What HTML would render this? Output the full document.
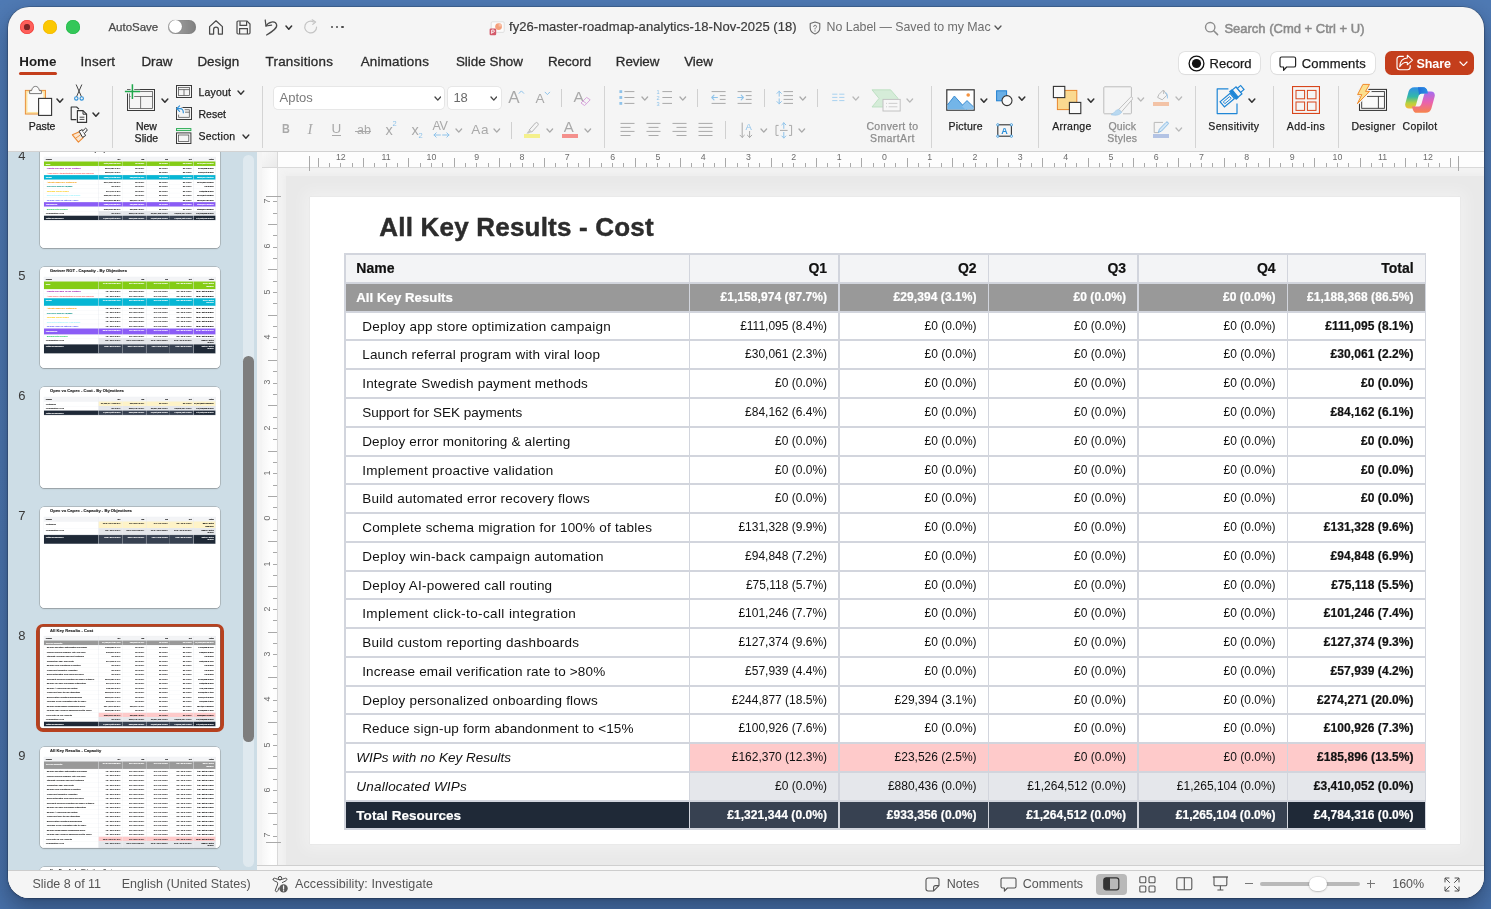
<!DOCTYPE html>
<html><head><meta charset="utf-8"><title>PowerPoint</title>
<style>
html,body{margin:0;padding:0}
body{width:1491px;height:909px;overflow:hidden;position:relative;font-family:"Liberation Sans", sans-serif;
background:#4a73aa;-webkit-font-smoothing:antialiased}
#desk{position:absolute;left:0;top:0;width:1491px;height:909px;background:linear-gradient(180deg,#4f7ab4 0%,#4b75ad 50%,#4770a8 100%)}
#win{position:absolute;left:8px;top:7px;width:1476px;height:891px;border-radius:21px;background:#f5f5f5;overflow:hidden;
box-shadow:0 0 0 0.5px rgba(0,0,0,.3),0 10px 22px 1px rgba(10,20,40,.36),0 1px 3px rgba(10,20,40,.25)}
#w{position:absolute;left:-8px;top:-7px;width:1491px;height:909px;will-change:transform}

.sl{position:absolute;left:0;top:0;width:1150.5px;height:647.5px;background:#fff;overflow:hidden;transform-origin:0 0}
.sl .ti{position:absolute;left:69.8px;top:12.2px;font-size:26px;font-weight:bold;color:#2c2c2c;line-height:36px;letter-spacing:.2px;white-space:nowrap;-webkit-text-stroke:.45px #2c2c2c}
.sl .c{position:absolute;box-sizing:border-box;white-space:nowrap;font-size:12px;color:#111;text-align:right;padding-right:11.9px;overflow:hidden}
.sl .c.n{text-align:left;font-size:13.5px;padding-left:11.3px;padding-right:0;letter-spacing:.2px}
.sl .c.i{padding-left:17.2px}
.sl .c.b{font-weight:bold;letter-spacing:.07px;-webkit-text-stroke:.2px currentColor}
.sl .c.hd{font-size:14px;letter-spacing:0}
.sl .c.it{font-style:italic;letter-spacing:.05px}
.sl .c.w{color:#fff}
.sl .c.wr{white-space:normal;line-height:15px;padding-top:6px;padding-left:42px}
.sl .ln{position:absolute;background:#d2d5dd}
.sl .tb{position:absolute;left:0;top:0;width:1150.5px;height:647.5px;transform-origin:0 0}
.th .tb{transform:translate(-11px,6px) scaleX(1.013)}
.th.t8 .tb{transform:translate(-11px,0px) scaleX(1.013)}
.th .ti{top:7.6px;left:64.4px;-webkit-text-stroke:.9px #2c2c2c}
.th .c{-webkit-text-stroke:.3px currentColor;font-size:14.5px!important;letter-spacing:-.62px!important}
.th .c.n{font-size:16px!important;letter-spacing:-.78px!important}
.th .c.b{-webkit-text-stroke:.5px currentColor}
.th .ln{background:#dfe1e7}

</style></head><body>
<div id="desk"></div>
<div id="win"><div id="w">
<div style="position:absolute;left:20px;top:20px;width:14px;height:14px;border-radius:50%;background:#fe5f5a;box-shadow:inset 0 0 0 0.6px #ee3a34;"><div style="position:absolute;left:4.4px;top:4.4px;width:5.2px;height:5.2px;border-radius:50%;background:#7d2626;"></div></div><div style="position:absolute;left:43px;top:20px;width:14px;height:14px;border-radius:50%;background:#fbc801;box-shadow:inset 0 0 0 0.6px #f2b400;"></div><div style="position:absolute;left:66px;top:20px;width:14px;height:14px;border-radius:50%;background:#34c759;box-shadow:inset 0 0 0 0.6px #1fb845;"></div><div style="position:absolute;top:19.3px;line-height:16px;font-size:11.5px;color:#4a4a4a;white-space:nowrap;left:108.4px;-webkit-text-stroke:0.25px #4a4a4a;">AutoSave</div><div style="position:absolute;left:168px;top:19.8px;width:28px;height:14.2px;border-radius:7.1px;background:linear-gradient(90deg,#a9a9a9,#7f7f7f);box-shadow:inset 0 0 1px rgba(0,0,0,.3);"><div style="position:absolute;left:0.6px;top:0.6px;width:13px;height:13px;border-radius:50%;background:#fff;box-shadow:0 0 1px rgba(0,0,0,.35);"></div></div><svg style="position:absolute;left:208px;top:18.5px;" width="16" height="16.5" viewBox="0 0 16 16.5" fill="none"><path d="M1.6 7.6 L8 1.8 L14.4 7.6 V15 H10.4 V10.6 a2.4 2.4 0 0 0 -4.8 0 V15 H1.6 Z" stroke="#4a4a4a" stroke-width="1.25" stroke-linejoin="round"/></svg><svg style="position:absolute;left:235.5px;top:19.5px;" width="15" height="15" viewBox="0 0 15 15" fill="none"><path d="M2.2 1 H11 L14 4 V12.8 a1.2 1.2 0 0 1 -1.2 1.2 H2.2 a1.2 1.2 0 0 1 -1.2 -1.2 V2.2 a1.2 1.2 0 0 1 1.2 -1.2 Z" stroke="#4a4a4a" stroke-width="1.2"/><path d="M4 1.2 V5.4 H10.6 V1.2" stroke="#4a4a4a" stroke-width="1.2"/><path d="M3.6 14 V8.6 H11.4 V14" stroke="#4a4a4a" stroke-width="1.2"/></svg><svg style="position:absolute;left:262.5px;top:17.5px;" width="16" height="18" viewBox="0 0 16 18" fill="none"><path d="M2.2 2 L3 8 L8.6 7.2" stroke="#4a4a4a" stroke-width="1.25" stroke-linecap="round" stroke-linejoin="round"/><path d="M3 8 C5.2 3.6 12.2 2.4 13.6 6.6 C14.6 9.8 10.4 12.8 3.6 17" stroke="#4a4a4a" stroke-width="1.25" stroke-linecap="round"/></svg><svg style="position:absolute;left:285.2px;top:24.6px;" width="7.6" height="5.2" viewBox="0 0 7.6 5.2" fill="none"><polyline points="1,1 3.8,4.2 6.6,1" stroke="#333" stroke-width="1.5" stroke-linecap="round" stroke-linejoin="round"/></svg><svg style="position:absolute;left:302.5px;top:19px;" width="16" height="16" viewBox="0 0 16 16" fill="none"><path d="M13.6 8 A5.9 5.9 0 1 1 10.6 2.9" stroke="#c4c4c4" stroke-width="1.2" stroke-linecap="round"/><path d="M9.2 0.8 L12.6 3 L9.8 5.4" stroke="#c4c4c4" stroke-width="1.2" stroke-linecap="round" stroke-linejoin="round"/></svg><div style="position:absolute;left:331px;top:25.6px;width:2.4px;height:2.4px;border-radius:50%;background:#4a4a4a;"></div><div style="position:absolute;left:336.1px;top:25.6px;width:2.4px;height:2.4px;border-radius:50%;background:#4a4a4a;"></div><div style="position:absolute;left:341.2px;top:25.6px;width:2.4px;height:2.4px;border-radius:50%;background:#4a4a4a;"></div><svg style="position:absolute;left:489px;top:21px;" width="17" height="15" viewBox="0 0 17 15" fill="none"><rect x="2.2" y="0.8" width="13" height="10.6" rx="1.2" fill="#fbfbfb" stroke="#d9d9d9" stroke-width="0.8"/><circle cx="9.6" cy="5.6" r="3.4" fill="#f4a07c"/><path d="M9.6 5.6 L9.6 2.2 A3.4 3.4 0 0 1 13 5.6 Z" fill="#f7c0a6"/><rect x="0.6" y="7.6" width="6.6" height="6.6" rx="1.2" fill="#d35a6a"/><path d="M2.7 12.8 V9 H4.2 a1.15 1.15 0 0 1 0 2.3 H2.7" stroke="#fff" stroke-width="0.9"/></svg><div style="position:absolute;top:18.9px;line-height:16px;font-size:13px;color:#3a3a3a;white-space:nowrap;letter-spacing:0.05px;left:509px;-webkit-text-stroke:0.2px #3a3a3a;">fy26-master-roadmap-analytics-18-Nov-2025 (18)</div><svg style="position:absolute;left:809px;top:20.5px;" width="12" height="14" viewBox="0 0 12 14" fill="none"><path d="M6 1 L10.8 2.6 V7 C10.8 10 8.6 12 6 13 C3.4 12 1.2 10 1.2 7 V2.6 Z" stroke="#6a6a6a" stroke-width="1.1" stroke-linejoin="round"/><path d="M4.7 5.6 a1.4 1.4 0 1 1 1.9 1.3 c-.5 .3 -.6 .6 -.6 1.1" stroke="#6a6a6a" stroke-width="0.9" stroke-linecap="round"/><circle cx="6" cy="9.9" r="0.55" fill="#6a6a6a"/></svg><div style="position:absolute;top:18.9px;line-height:16px;font-size:12.4px;color:#6e6e6e;white-space:nowrap;letter-spacing:-0.02px;left:826.6px;">No Label — Saved to my Mac</div><svg style="position:absolute;left:994px;top:25.2px;" width="8" height="5.2" viewBox="0 0 8 5.2" fill="none"><polyline points="1,1 4,4.2 7,1" stroke="#555" stroke-width="1.3" stroke-linecap="round" stroke-linejoin="round"/></svg><svg style="position:absolute;left:1204px;top:21px;" width="15" height="15" viewBox="0 0 15 15" fill="none"><circle cx="6.2" cy="6.2" r="4.7" stroke="#8c8c8c" stroke-width="1.4"/><path d="M9.7 9.7 L13.6 13.6" stroke="#8c8c8c" stroke-width="1.5" stroke-linecap="round"/></svg><div style="position:absolute;top:20.9px;line-height:16px;font-size:13px;color:#8a8a8a;white-space:nowrap;left:1224.4px;-webkit-text-stroke:0.5px #8a8a8a;">Search (Cmd + Ctrl + U)</div><div style="position:absolute;top:54px;line-height:16px;font-size:13.4px;color:#1e1e1e;white-space:nowrap;font-weight:bold;letter-spacing:-0.055px;left:19.3px;">Home</div><div style="position:absolute;top:54px;line-height:16px;font-size:13.4px;color:#2b2b2b;white-space:nowrap;letter-spacing:0.233px;left:80.4px;-webkit-text-stroke:0.3px #2b2b2b;">Insert</div><div style="position:absolute;top:54px;line-height:16px;font-size:13.4px;color:#2b2b2b;white-space:nowrap;letter-spacing:-0.162px;left:141.6px;-webkit-text-stroke:0.3px #2b2b2b;">Draw</div><div style="position:absolute;top:54px;line-height:16px;font-size:13.4px;color:#2b2b2b;white-space:nowrap;letter-spacing:0.035px;left:197.4px;-webkit-text-stroke:0.3px #2b2b2b;">Design</div><div style="position:absolute;top:54px;line-height:16px;font-size:13.4px;color:#2b2b2b;white-space:nowrap;letter-spacing:0.245px;left:265.5px;-webkit-text-stroke:0.3px #2b2b2b;">Transitions</div><div style="position:absolute;top:54px;line-height:16px;font-size:13.4px;color:#2b2b2b;white-space:nowrap;letter-spacing:0.215px;left:360.7px;-webkit-text-stroke:0.3px #2b2b2b;">Animations</div><div style="position:absolute;top:54px;line-height:16px;font-size:13.4px;color:#2b2b2b;white-space:nowrap;letter-spacing:0.01px;left:455.9px;-webkit-text-stroke:0.3px #2b2b2b;">Slide Show</div><div style="position:absolute;top:54px;line-height:16px;font-size:13.4px;color:#2b2b2b;white-space:nowrap;letter-spacing:0.005px;left:547.9px;-webkit-text-stroke:0.3px #2b2b2b;">Record</div><div style="position:absolute;top:54px;line-height:16px;font-size:13.4px;color:#2b2b2b;white-space:nowrap;letter-spacing:-0.068px;left:615.8px;-webkit-text-stroke:0.3px #2b2b2b;">Review</div><div style="position:absolute;top:54px;line-height:16px;font-size:13.4px;color:#2b2b2b;white-space:nowrap;letter-spacing:-0.024px;left:684.2px;-webkit-text-stroke:0.3px #2b2b2b;">View</div><div style="position:absolute;left:19px;top:71.8px;width:38px;height:3px;background:#c43e1c;border-radius:1.5px;"></div><div style="position:absolute;left:1179px;top:51.8px;width:80.5px;height:22.6px;background:#fff;border-radius:6px;box-shadow:0 0 0 0.8px #dcdcdc,0 0.5px 1px rgba(0,0,0,.08);"></div><svg style="position:absolute;left:1187.5px;top:54.7px;" width="17" height="17" viewBox="0 0 17 17" fill="none"><circle cx="8.5" cy="8.5" r="7.4" stroke="#111" stroke-width="1.3"/><circle cx="8.5" cy="8.5" r="4.6" fill="#111"/></svg><div style="position:absolute;top:56px;line-height:16px;font-size:13px;color:#1a1a1a;white-space:nowrap;left:1209.6px;-webkit-text-stroke:0.25px #1a1a1a;">Record</div><div style="position:absolute;left:1271px;top:51.8px;width:103.5px;height:22.6px;background:#fff;border-radius:6px;box-shadow:0 0 0 0.8px #dcdcdc,0 0.5px 1px rgba(0,0,0,.08);"></div><svg style="position:absolute;left:1279.4px;top:55.6px;" width="18" height="16" viewBox="0 0 18 16" fill="none"><path d="M2.6 1 H15 a1.6 1.6 0 0 1 1.6 1.6 V9.4 a1.6 1.6 0 0 1 -1.6 1.6 H7.6 L4.6 14.4 V11 H2.6 a1.6 1.6 0 0 1 -1.6 -1.6 V2.6 a1.6 1.6 0 0 1 1.6 -1.6 Z" stroke="#222" stroke-width="1.2" stroke-linejoin="round"/></svg><div style="position:absolute;top:56px;line-height:16px;font-size:13px;color:#1a1a1a;white-space:nowrap;letter-spacing:0.18px;left:1301.7px;-webkit-text-stroke:0.25px #1a1a1a;">Comments</div><div style="position:absolute;left:1385.3px;top:51.2px;width:89px;height:23.6px;background:#c43e1c;border-radius:6.5px;"></div><svg style="position:absolute;left:1395.5px;top:54px;" width="18" height="18" viewBox="0 0 18 18" fill="none"><path d="M7.4 2.3 H3.7 a2.7 2.7 0 0 0 -2.7 2.7 V13 a2.7 2.7 0 0 0 2.7 2.7 H11.5 a2.7 2.7 0 0 0 2.7 -2.7 V11.6" stroke="#fff" stroke-width="1.15" stroke-linecap="round"/><path d="M11.3 1.2 L16.5 6.1 L11.3 10.8 V8.3 C8 8.2 5.6 9.6 3.7 12.8 C3.9 8 6.6 4.4 11.3 4.1 Z" fill="#c43e1c" stroke="#fff" stroke-width="1.05" stroke-linejoin="round"/></svg><div style="position:absolute;top:56px;line-height:16px;font-size:12.6px;color:#fff;white-space:nowrap;font-weight:bold;letter-spacing:-0.15px;left:1416.5px;">Share</div><svg style="position:absolute;left:1458.7px;top:60.8px;" width="9" height="5.6" viewBox="0 0 9 5.6" fill="none"><polyline points="1,1 4.5,4.6 8,1" stroke="#fff" stroke-width="1.2" stroke-linecap="round" stroke-linejoin="round"/></svg><svg style="position:absolute;left:24px;top:85px;" width="30" height="32" viewBox="0 0 30 32" fill="none"><rect x="2.5" y="6.5" width="17.8" height="21.4" fill="#fbfbfb" stroke="#fbe2a0" stroke-width="1.9"/><rect x="1.35" y="5.35" width="20.1" height="23.7" stroke="#e8872e" stroke-width="0.9"/><path d="M5.6 8.6 V5.6 H7.6 C8.2 2.6 9.6 1.4 11.5 1.4 C13.4 1.4 14.8 2.6 15.4 5.6 H17.4 V8.6 Z" fill="#fafafa" stroke="#6a6a6a" stroke-width="0.9" stroke-linejoin="round"/><rect x="14.6" y="13.4" width="13" height="17" fill="#fff" stroke="#333" stroke-width="1.1"/></svg><svg style="position:absolute;left:56.2px;top:97.55px;" width="7.8" height="5.3" viewBox="0 0 7.8 5.3" fill="none"><polyline points="1,1 3.9,4.3 6.8,1" stroke="#333" stroke-width="1.5" stroke-linecap="round" stroke-linejoin="round"/></svg><div style="position:absolute;top:118.3px;line-height:16px;font-size:10.5px;color:#1e1e1e;white-space:nowrap;letter-spacing:-0.052px;left:-108px;width:300px;text-align:center;-webkit-text-stroke:0.25px #1e1e1e;">Paste</div><svg style="position:absolute;left:73px;top:83.5px;" width="13" height="17.5" viewBox="0 0 13 17.5" fill="none"><path d="M3.3 0.9 L8.3 12.4 M8.7 0.9 L3.7 12.4" stroke="#444" stroke-width="1" stroke-linecap="round"/><circle cx="3.3" cy="14.4" r="1.7" stroke="#2b8fd9" stroke-width="1.1"/><circle cx="8.7" cy="14.4" r="1.7" stroke="#2b8fd9" stroke-width="1.1"/></svg><svg style="position:absolute;left:70px;top:105.5px;" width="18" height="17.5" viewBox="0 0 18 17.5" fill="none"><path d="M6.4 13.6 H1.2 V1 H6.6 L9 3.2" stroke="#333" stroke-width="1.1" stroke-linejoin="round"/><path d="M7.4 4.6 H13 L16.6 8.2 V16.4 H7.4 Z" fill="#fafafa" stroke="#333" stroke-width="1.1" stroke-linejoin="round"/><path d="M13 4.6 V8.2 H16.6" stroke="#333" stroke-width="1"/><path d="M9.6 11.2 H14.4 M9.6 13.4 H14.4" stroke="#333" stroke-width="0.9"/></svg><svg style="position:absolute;left:92px;top:111.65px;" width="7.8" height="5.3" viewBox="0 0 7.8 5.3" fill="none"><polyline points="1,1 3.9,4.3 6.8,1" stroke="#333" stroke-width="1.5" stroke-linecap="round" stroke-linejoin="round"/></svg><svg style="position:absolute;left:70.5px;top:127px;" width="18" height="17" viewBox="0 0 18 17" fill="none"><path d="M1.4 7.8 L9 4.4 L12.2 10.6 L7.4 15.2 Z" fill="#fbe6cf" stroke="#ec8a34" stroke-width="1.1" stroke-linejoin="round"/><path d="M4.4 11.4 L9.6 7.8" stroke="#ec8a34" stroke-width="0.9"/><path d="M8 4.2 L11.2 2.6 L14.6 8.6 L11.6 10.4 Z" fill="#fafafa" stroke="#333" stroke-width="1" stroke-linejoin="round"/><path d="M11.6 4 L14.6 1.2 L16.4 2.8 L13.6 6.4" fill="#fafafa" stroke="#333" stroke-width="1" stroke-linejoin="round"/></svg><div style="position:absolute;left:112px;top:86px;width:1px;height:61.6px;background:#d4d4d4;"></div><svg style="position:absolute;left:123px;top:83px;" width="34" height="30" viewBox="0 0 34 30" fill="none"><rect x="4.5" y="6.5" width="27" height="21" stroke="#3a3a3a" stroke-width="1"/><rect x="6.6" y="8.6" width="22.8" height="16.8" stroke="#444" stroke-width="0.7"/><path d="M6.6 13.5 H29.4 M17.6 13.5 V25.4" stroke="#444" stroke-width="0.7"/><path d="M1.9 8.6 H17.1 M9.4 1.2 V15.9" stroke="#f5f5f5" stroke-width="3.6"/><path d="M1.9 8.6 H17.1 M9.4 1.2 V15.9" stroke="#1ea84b" stroke-width="1.5"/></svg><svg style="position:absolute;left:161px;top:97.95px;" width="7.8" height="5.3" viewBox="0 0 7.8 5.3" fill="none"><polyline points="1,1 3.9,4.3 6.8,1" stroke="#333" stroke-width="1.5" stroke-linecap="round" stroke-linejoin="round"/></svg><div style="position:absolute;top:118.3px;line-height:16px;font-size:10.5px;color:#1e1e1e;white-space:nowrap;letter-spacing:-0.005px;left:-3.6px;width:300px;text-align:center;-webkit-text-stroke:0.25px #1e1e1e;">New</div><div style="position:absolute;top:130.1px;line-height:16px;font-size:10.5px;color:#1e1e1e;white-space:nowrap;letter-spacing:0.048px;left:-3.6px;width:300px;text-align:center;-webkit-text-stroke:0.25px #1e1e1e;">Slide</div><svg style="position:absolute;left:175px;top:84px;" width="18" height="15" viewBox="0 0 18 15" fill="none"><rect x="1.5" y="1.5" width="15" height="12" stroke="#3a3a3a" stroke-width="1"/><rect x="3.6" y="3.6" width="10.8" height="7.8" stroke="#444" stroke-width="0.7"/><path d="M3.6 5.6 H14.4 M9 5.6 V11.4" stroke="#444" stroke-width="0.7"/></svg><div style="position:absolute;top:84.1px;line-height:16px;font-size:10.5px;color:#1e1e1e;white-space:nowrap;letter-spacing:0.195px;left:198.4px;-webkit-text-stroke:0.25px #1e1e1e;">Layout</div><svg style="position:absolute;left:236.9px;top:89.9px;" width="7.8" height="5.2" viewBox="0 0 7.8 5.2" fill="none"><polyline points="1,1 3.9,4.2 6.8,1" stroke="#333" stroke-width="1.4" stroke-linecap="round" stroke-linejoin="round"/></svg><svg style="position:absolute;left:175px;top:105px;" width="18" height="16" viewBox="0 0 18 16" fill="none"><rect x="1.5" y="2.5" width="15" height="12" stroke="#3a3a3a" stroke-width="1"/><path d="M9.4 4.7 H14.4 V12.4 H3.6 V9.6" stroke="#444" stroke-width="0.7"/><path d="M10 7.2 H14.4" stroke="#444" stroke-width="0.7"/><path d="M1.8 3.6 H5.4 C7.4 3.6 8.6 5.2 8.4 8" stroke="#f5f5f5" stroke-width="3.4"/><path d="M4.6 0.9 L1.7 3.6 L4.6 6.3 M1.9 3.6 H5.2 C7.2 3.6 8.5 5.2 8.3 7.8" stroke="#2b8fd9" stroke-width="1.15" stroke-linecap="round" stroke-linejoin="round"/></svg><div style="position:absolute;top:106.1px;line-height:16px;font-size:10.5px;color:#1e1e1e;white-space:nowrap;letter-spacing:0.033px;left:198.4px;-webkit-text-stroke:0.25px #1e1e1e;">Reset</div><svg style="position:absolute;left:175px;top:127px;" width="18" height="18" viewBox="0 0 18 18" fill="none"><rect x="1.5" y="1.6" width="14.4" height="2" stroke="#1ea84b" stroke-width="0.9" fill="#e3f4e8"/><rect x="1.5" y="5.9" width="14.4" height="10.6" stroke="#3a3a3a" stroke-width="1"/><rect x="3.6" y="8" width="10.2" height="6.4" stroke="#444" stroke-width="0.7"/></svg><div style="position:absolute;top:128.3px;line-height:16px;font-size:10.5px;color:#1e1e1e;white-space:nowrap;letter-spacing:0.281px;left:198.4px;-webkit-text-stroke:0.25px #1e1e1e;">Section</div><svg style="position:absolute;left:242px;top:134px;" width="7.8" height="5.2" viewBox="0 0 7.8 5.2" fill="none"><polyline points="1,1 3.9,4.2 6.8,1" stroke="#333" stroke-width="1.4" stroke-linecap="round" stroke-linejoin="round"/></svg><div style="position:absolute;left:262px;top:86px;width:1px;height:61.6px;background:#d4d4d4;"></div><div style="position:absolute;left:273.6px;top:86.8px;width:170.6px;height:22.6px;background:#fff;border-radius:4px;box-shadow:0 0 0 0.8px #e2e2e2;"></div><div style="position:absolute;top:89.8px;line-height:16px;font-size:13px;color:#7a7a7a;white-space:nowrap;left:279.5px;">Aptos</div><svg style="position:absolute;left:433.5px;top:95.65px;" width="7.6" height="5.1" viewBox="0 0 7.6 5.1" fill="none"><polyline points="1,1 3.8,4.1 6.6,1" stroke="#444" stroke-width="1.3" stroke-linecap="round" stroke-linejoin="round"/></svg><div style="position:absolute;left:447.6px;top:86.8px;width:53px;height:22.6px;background:#fff;border-radius:4px;box-shadow:0 0 0 0.8px #e2e2e2;"></div><div style="position:absolute;top:89.8px;line-height:16px;font-size:13px;color:#6a6a6a;white-space:nowrap;left:453.4px;">18</div><svg style="position:absolute;left:489.6px;top:95.65px;" width="7.6" height="5.1" viewBox="0 0 7.6 5.1" fill="none"><polyline points="1,1 3.8,4.1 6.6,1" stroke="#444" stroke-width="1.3" stroke-linecap="round" stroke-linejoin="round"/></svg><div style="position:absolute;top:89.6px;line-height:16px;font-size:17px;color:#a9a9a9;white-space:nowrap;left:508.2px;">A</div><svg style="position:absolute;left:517.5px;top:90.4px;" width="7" height="4.5" viewBox="0 0 7 4.5" fill="none"><polyline points="0.8,3.6 3.4,0.9 6,3.6" stroke="#8fc3ea" stroke-width="1"/></svg><div style="position:absolute;top:91.2px;line-height:16px;font-size:13.5px;color:#a9a9a9;white-space:nowrap;left:535.5px;">A</div><svg style="position:absolute;left:543.6px;top:90.8px;" width="7" height="4.5" viewBox="0 0 7 4.5" fill="none"><polyline points="0.8,0.9 3.4,3.6 6,0.9" stroke="#8fc3ea" stroke-width="1"/></svg><div style="position:absolute;left:561.1px;top:89px;width:1px;height:17.8px;background:#d0d0d0;"></div><div style="position:absolute;top:88.6px;line-height:16px;font-size:15.5px;color:#a9a9a9;white-space:nowrap;left:573.6px;">A</div><svg style="position:absolute;left:579.5px;top:95.5px;" width="12" height="11" viewBox="0 0 12 11" fill="none"><path d="M1 7 L6.6 1.4 L10.2 3.8 L4.6 9.6 Z" stroke="#d7a6dc" stroke-width="1" stroke-linejoin="round"/><path d="M3 5 L6.6 7.6" stroke="#d7a6dc" stroke-width="1"/></svg><div style="position:absolute;left:604.2px;top:86px;width:1px;height:61.6px;background:#d4d4d4;"></div><div style="position:absolute;top:121.2px;line-height:16px;font-size:13.5px;color:#a9a9a9;white-space:nowrap;font-weight:bold;left:281.8px;transform:scaleX(.8);transform-origin:0 50%;">B</div><div style="position:absolute;top:121.2px;line-height:16px;font-size:14px;color:#a9a9a9;white-space:nowrap;left:307.6px;font-style:italic;font-family:'Liberation Serif',serif;font-size:15px;">I</div><div style="position:absolute;top:121px;line-height:16px;font-size:13.5px;color:#a9a9a9;white-space:nowrap;left:331.6px;">U</div><div style="position:absolute;left:331.8px;top:135.4px;width:9.4px;height:1px;background:#a9a9a9;"></div><div style="position:absolute;top:121.6px;line-height:16px;font-size:12.5px;color:#a9a9a9;white-space:nowrap;left:357px;">ab</div><div style="position:absolute;left:355px;top:131px;width:15.8px;height:1px;background:#a9a9a9;"></div><div style="position:absolute;top:122px;line-height:16px;font-size:14.5px;color:#a9a9a9;white-space:nowrap;left:385.6px;">x</div><div style="position:absolute;top:116.2px;line-height:16px;font-size:7.5px;color:#8fc3ea;white-space:nowrap;left:392.4px;">2</div><div style="position:absolute;top:122px;line-height:16px;font-size:14.5px;color:#a9a9a9;white-space:nowrap;left:411.6px;">x</div><div style="position:absolute;top:128.2px;line-height:16px;font-size:7.5px;color:#8fc3ea;white-space:nowrap;left:418.4px;">2</div><div style="position:absolute;top:118.4px;line-height:16px;font-size:12.5px;color:#a9a9a9;white-space:nowrap;letter-spacing:-0.6px;left:432.6px;">AV</div><svg style="position:absolute;left:432.8px;top:132.4px;" width="17" height="6" viewBox="0 0 17 6" fill="none"><path d="M1 3 H7.4 M3.2 0.8 L1 3 L3.2 5.2 M9.6 3 H16 M13.8 0.8 L16 3 L13.8 5.2" stroke="#8fc3ea" stroke-width="1" stroke-linecap="round" stroke-linejoin="round"/></svg><svg style="position:absolute;left:455.2px;top:127.65px;" width="7.6" height="5.1" viewBox="0 0 7.6 5.1" fill="none"><polyline points="1,1 3.8,4.1 6.6,1" stroke="#a9a9a9" stroke-width="1.3" stroke-linecap="round" stroke-linejoin="round"/></svg><div style="position:absolute;top:121.6px;line-height:16px;font-size:13.5px;color:#a9a9a9;white-space:nowrap;letter-spacing:0.8px;left:471.2px;">Aa</div><svg style="position:absolute;left:493.2px;top:127.65px;" width="7.6" height="5.1" viewBox="0 0 7.6 5.1" fill="none"><polyline points="1,1 3.8,4.1 6.6,1" stroke="#a9a9a9" stroke-width="1.3" stroke-linecap="round" stroke-linejoin="round"/></svg><div style="position:absolute;left:511.2px;top:121.5px;width:1px;height:17px;background:#d0d0d0;"></div><svg style="position:absolute;left:524px;top:120.5px;" width="17" height="14" viewBox="0 0 17 14" fill="none"><path d="M5.2 9 L11.4 2 a1.6 1.6 0 0 1 2.4 0.2 a1.6 1.6 0 0 1 0 2.2 L7.8 11 Z" stroke="#b4b4b4" stroke-width="1" stroke-linejoin="round"/><path d="M5.2 9 L7.8 11 L4.4 12.4 L2.4 12.4 Z" fill="#c4c4c4"/></svg><div style="position:absolute;left:524px;top:134px;width:16px;height:3.8px;background:#f4f08c;"></div><svg style="position:absolute;left:546px;top:127.65px;" width="7.6" height="5.1" viewBox="0 0 7.6 5.1" fill="none"><polyline points="1,1 3.8,4.1 6.6,1" stroke="#a9a9a9" stroke-width="1.3" stroke-linecap="round" stroke-linejoin="round"/></svg><div style="position:absolute;top:119px;line-height:16px;font-size:15px;color:#a9a9a9;white-space:nowrap;left:563.8px;">A</div><div style="position:absolute;left:562px;top:134px;width:16px;height:3.8px;background:#f4908c;"></div><svg style="position:absolute;left:584.2px;top:127.65px;" width="7.6" height="5.1" viewBox="0 0 7.6 5.1" fill="none"><polyline points="1,1 3.8,4.1 6.6,1" stroke="#a9a9a9" stroke-width="1.3" stroke-linecap="round" stroke-linejoin="round"/></svg><svg style="position:absolute;left:618.5px;top:89px;" width="16" height="17" viewBox="0 0 16 17" fill="none"><rect x="0.4" y="1.2" width="2.8" height="2.8" fill="#8fc3ea"/><path d="M5.4 2.6 H15.4" stroke="#a9a9a9" stroke-width="1"/><rect x="0.4" y="7.1" width="2.8" height="2.8" fill="#8fc3ea"/><path d="M5.4 8.5 H15.4" stroke="#a9a9a9" stroke-width="1"/><rect x="0.4" y="13" width="2.8" height="2.8" fill="#8fc3ea"/><path d="M5.4 14.4 H15.4" stroke="#a9a9a9" stroke-width="1"/></svg><svg style="position:absolute;left:641.2px;top:95.65px;" width="7.6" height="5.1" viewBox="0 0 7.6 5.1" fill="none"><polyline points="1,1 3.8,4.1 6.6,1" stroke="#a9a9a9" stroke-width="1.3" stroke-linecap="round" stroke-linejoin="round"/></svg><svg style="position:absolute;left:656px;top:88px;" width="17" height="19" viewBox="0 0 17 19" fill="none"><path d="M6.4 3.6 H16" stroke="#a9a9a9" stroke-width="1"/><path d="M6.4 9.5 H16" stroke="#a9a9a9" stroke-width="1"/><path d="M6.4 15.4 H16" stroke="#a9a9a9" stroke-width="1"/><text x="0.4" y="6" font-size="5.6" fill="#8fc3ea" font-family="Liberation Sans">1</text><text x="0.4" y="12" font-size="5.6" fill="#8fc3ea" font-family="Liberation Sans">2</text><text x="0.4" y="18" font-size="5.6" fill="#8fc3ea" font-family="Liberation Sans">3</text></svg><svg style="position:absolute;left:679.2px;top:95.65px;" width="7.6" height="5.1" viewBox="0 0 7.6 5.1" fill="none"><polyline points="1,1 3.8,4.1 6.6,1" stroke="#a9a9a9" stroke-width="1.3" stroke-linecap="round" stroke-linejoin="round"/></svg><div style="position:absolute;left:696.9px;top:89px;width:1px;height:17.8px;background:#d0d0d0;"></div><svg style="position:absolute;left:710.5px;top:90px;" width="16" height="15" viewBox="0 0 16 15" fill="none"><path d="M0.6 1.6 H14.6 M8.8 5.6 H14.6 M8.8 9.4 H14.6 M0.6 13.4 H14.6" stroke="#a9a9a9" stroke-width="1"/><path d="M6.4 7.5 H0.8 M3 5.2 L0.8 7.5 L3 9.8" stroke="#8fc3ea" stroke-width="1.1" stroke-linecap="round" stroke-linejoin="round"/></svg><svg style="position:absolute;left:736.5px;top:90px;" width="16" height="15" viewBox="0 0 16 15" fill="none"><path d="M0.6 1.6 H14.6 M8.8 5.6 H14.6 M8.8 9.4 H14.6 M0.6 13.4 H14.6" stroke="#a9a9a9" stroke-width="1"/><path d="M0.8 7.5 H6.4 M4.2 5.2 L6.4 7.5 L4.2 9.8" stroke="#8fc3ea" stroke-width="1.1" stroke-linecap="round" stroke-linejoin="round"/></svg><div style="position:absolute;left:764px;top:89px;width:1px;height:17.8px;background:#d0d0d0;"></div><svg style="position:absolute;left:776px;top:90px;" width="18" height="15" viewBox="0 0 18 15" fill="none"><path d="M7.6 1.6 H17 M7.6 5.6 H17 M7.6 9.4 H17 M7.6 13.4 H17" stroke="#a9a9a9" stroke-width="1"/><path d="M3.2 1.2 V6.2 M3.2 8.8 V13.8 M1 3.4 L3.2 1.2 L5.4 3.4 M1 11.6 L3.2 13.8 L5.4 11.6" stroke="#8fc3ea" stroke-width="1" stroke-linecap="round" stroke-linejoin="round"/></svg><svg style="position:absolute;left:799.1px;top:95.65px;" width="7.6" height="5.1" viewBox="0 0 7.6 5.1" fill="none"><polyline points="1,1 3.8,4.1 6.6,1" stroke="#a9a9a9" stroke-width="1.3" stroke-linecap="round" stroke-linejoin="round"/></svg><div style="position:absolute;left:817px;top:89px;width:1px;height:17.8px;background:#d0d0d0;"></div><svg style="position:absolute;left:619.5px;top:121px;" width="16" height="17" viewBox="0 0 16 17" fill="none"><path d="M0.5 2.4 H14.5" stroke="#a9a9a9" stroke-width="1"/><path d="M0.5 6.4 H10.5" stroke="#a9a9a9" stroke-width="1"/><path d="M0.5 10.4 H14.5" stroke="#a9a9a9" stroke-width="1"/><path d="M0.5 14.5 H10.5" stroke="#a9a9a9" stroke-width="1"/></svg><svg style="position:absolute;left:645.5px;top:121px;" width="16" height="17" viewBox="0 0 16 17" fill="none"><path d="M0.5 2.4 H14.5" stroke="#a9a9a9" stroke-width="1"/><path d="M2.5 6.4 H12.5" stroke="#a9a9a9" stroke-width="1"/><path d="M0.5 10.4 H14.5" stroke="#a9a9a9" stroke-width="1"/><path d="M2.5 14.5 H12.5" stroke="#a9a9a9" stroke-width="1"/></svg><svg style="position:absolute;left:671.5px;top:121px;" width="16" height="17" viewBox="0 0 16 17" fill="none"><path d="M0.5 2.4 H14.5" stroke="#a9a9a9" stroke-width="1"/><path d="M4.5 6.4 H14.5" stroke="#a9a9a9" stroke-width="1"/><path d="M0.5 10.4 H14.5" stroke="#a9a9a9" stroke-width="1"/><path d="M4.5 14.5 H14.5" stroke="#a9a9a9" stroke-width="1"/></svg><svg style="position:absolute;left:697.5px;top:121px;" width="16" height="17" viewBox="0 0 16 17" fill="none"><path d="M0.5 2.4 H14.5" stroke="#a9a9a9" stroke-width="1"/><path d="M0.5 6.4 H14.5" stroke="#a9a9a9" stroke-width="1"/><path d="M0.5 10.4 H14.5" stroke="#a9a9a9" stroke-width="1"/><path d="M0.5 14.5 H14.5" stroke="#a9a9a9" stroke-width="1"/></svg><div style="position:absolute;left:724.9px;top:121px;width:1px;height:17.5px;background:#d0d0d0;"></div><svg style="position:absolute;left:739px;top:121.5px;" width="16" height="17" viewBox="0 0 16 17" fill="none"><path d="M3.2 1 V15.4 M1 13.2 L3.2 15.4 L5.4 13.2 M10.6 9.4 V15.4 M8.4 13.2 L10.6 15.4 L12.8 13.2" stroke="#a9a9a9" stroke-width="1" stroke-linecap="round" stroke-linejoin="round"/><text x="6.6" y="8" font-size="9.5" fill="#8fc3ea" font-family="Liberation Sans">A</text></svg><svg style="position:absolute;left:760px;top:127.65px;" width="7.6" height="5.1" viewBox="0 0 7.6 5.1" fill="none"><polyline points="1,1 3.8,4.1 6.6,1" stroke="#a9a9a9" stroke-width="1.3" stroke-linecap="round" stroke-linejoin="round"/></svg><svg style="position:absolute;left:775.4px;top:121.5px;" width="18" height="17" viewBox="0 0 18 17" fill="none"><path d="M3.6 3.4 H1 V13.4 H3.6 M14 3.4 H16.6 V13.4 H14" stroke="#a9a9a9" stroke-width="1"/><path d="M5 8.4 H12.6" stroke="#a9a9a9" stroke-width="1"/><path d="M8.8 0.8 V6.4 M6.8 2.8 L8.8 0.8 L10.8 2.8 M8.8 10.4 V16 M6.8 14 L8.8 16 L10.8 14" stroke="#8fc3ea" stroke-width="1" stroke-linecap="round" stroke-linejoin="round"/></svg><svg style="position:absolute;left:798.1px;top:127.65px;" width="7.6" height="5.1" viewBox="0 0 7.6 5.1" fill="none"><polyline points="1,1 3.8,4.1 6.6,1" stroke="#a9a9a9" stroke-width="1.3" stroke-linecap="round" stroke-linejoin="round"/></svg><svg style="position:absolute;left:831.5px;top:93px;" width="13" height="9" viewBox="0 0 13 9" fill="none"><path d="M0.2 1.2 H5.4 M7.2 1.2 H12.4 M0.2 4.4 H5.4 M7.2 4.4 H12.4 M0.2 7.6 H5.4 M7.2 7.6 H12.4" stroke="#a9d2f0" stroke-width="1"/></svg><svg style="position:absolute;left:852.1px;top:95.65px;" width="7.6" height="5.1" viewBox="0 0 7.6 5.1" fill="none"><polyline points="1,1 3.8,4.1 6.6,1" stroke="#b8b8b8" stroke-width="1.3" stroke-linecap="round" stroke-linejoin="round"/></svg><svg style="position:absolute;left:870.5px;top:88.5px;" width="30" height="23" viewBox="0 0 30 23" fill="none"><path d="M1 0.8 H19.6 L27 9.4 L19.6 18 H1 L8 9.4 Z" fill="#d5ecd8" stroke="#b5dcbb" stroke-width="0.8" stroke-linejoin="round"/><rect x="12" y="10.4" width="17.2" height="11.6" fill="#f7f7f7" stroke="#c2c2c2" stroke-width="1"/><path d="M15 14.4 H16 M17.6 14.4 H26.4 M15 17.8 H16 M17.6 17.8 H26.4" stroke="#c8c8c8" stroke-width="0.9"/></svg><svg style="position:absolute;left:906px;top:97.65px;" width="7.6" height="5.1" viewBox="0 0 7.6 5.1" fill="none"><polyline points="1,1 3.8,4.1 6.6,1" stroke="#b8b8b8" stroke-width="1.3" stroke-linecap="round" stroke-linejoin="round"/></svg><div style="position:absolute;top:118.3px;line-height:16px;font-size:10.5px;color:#8c8c8c;white-space:nowrap;letter-spacing:0.345px;left:742.4px;width:300px;text-align:center;-webkit-text-stroke:0.25px #8c8c8c;">Convert to</div><div style="position:absolute;top:130.3px;line-height:16px;font-size:10.5px;color:#8c8c8c;white-space:nowrap;letter-spacing:0.41px;left:742.4px;width:300px;text-align:center;-webkit-text-stroke:0.25px #8c8c8c;">SmartArt</div><div style="position:absolute;left:931px;top:86px;width:1px;height:61.6px;background:#d4d4d4;"></div><svg style="position:absolute;left:945.5px;top:88.5px;" width="29" height="22" viewBox="0 0 29 22" fill="none"><rect x="0.8" y="0.8" width="27.4" height="20.4" fill="#fff" stroke="#333" stroke-width="1.2"/><path d="M1.4 16 L8.4 7 L17.6 17.2 L22 20.6 H1.4 Z" fill="#73b5e8"/><path d="M8.4 7 L1.4 16 M8.4 7 L20.6 20.6" stroke="#2f86cf" stroke-width="0.9"/><path d="M15.6 17 L21 11.6 L27.6 18 V20.6 H19.4 Z" fill="#8cc3ee"/><path d="M16.2 16.4 L21 11.6 L27.6 18" stroke="#2f86cf" stroke-width="0.9"/><circle cx="22.2" cy="6" r="1.8" fill="#f5923e"/></svg><svg style="position:absolute;left:979.9px;top:97.65px;" width="7.8" height="5.3" viewBox="0 0 7.8 5.3" fill="none"><polyline points="1,1 3.9,4.3 6.8,1" stroke="#333" stroke-width="1.5" stroke-linecap="round" stroke-linejoin="round"/></svg><div style="position:absolute;top:118.3px;line-height:16px;font-size:10.5px;color:#1e1e1e;white-space:nowrap;letter-spacing:0.273px;left:815.7px;width:300px;text-align:center;-webkit-text-stroke:0.25px #1e1e1e;">Picture</div><svg style="position:absolute;left:995.5px;top:89.5px;" width="17" height="17" viewBox="0 0 17 17" fill="none"><rect x="0.6" y="0.8" width="10" height="10" fill="#69aee6" stroke="#1f7fd1" stroke-width="1"/><circle cx="11" cy="10.6" r="5" fill="#fafafa" stroke="#333" stroke-width="1.1"/></svg><svg style="position:absolute;left:1018.1px;top:95.55px;" width="7.8" height="5.3" viewBox="0 0 7.8 5.3" fill="none"><polyline points="1,1 3.9,4.3 6.8,1" stroke="#333" stroke-width="1.5" stroke-linecap="round" stroke-linejoin="round"/></svg><svg style="position:absolute;left:995.5px;top:122.5px;" width="17.5" height="15.5" viewBox="0 0 17.5 15.5" fill="none"><rect x="1.8" y="1.8" width="13.6" height="11.4" stroke="#333" stroke-width="1.1"/><text x="5.2" y="11" font-size="9" font-weight="bold" fill="#2b8fd9" font-family="Liberation Sans">A</text><circle cx="1.8" cy="1.8" r="1.15" fill="#fff" stroke="#2b8fd9" stroke-width="0.8"/><circle cx="15.4" cy="1.8" r="1.15" fill="#fff" stroke="#2b8fd9" stroke-width="0.8"/><circle cx="1.8" cy="13.2" r="1.15" fill="#fff" stroke="#2b8fd9" stroke-width="0.8"/><circle cx="15.4" cy="13.2" r="1.15" fill="#fff" stroke="#2b8fd9" stroke-width="0.8"/></svg><div style="position:absolute;left:1037.8px;top:86px;width:1px;height:61.6px;background:#d4d4d4;"></div><svg style="position:absolute;left:1052px;top:85px;" width="30" height="30" viewBox="0 0 30 30" fill="none"><rect x="5.4" y="5.4" width="19.4" height="19.2" fill="#fad990" stroke="#e8872e" stroke-width="1"/><rect x="1.4" y="1.4" width="11.4" height="11.2" fill="#fafafa" stroke="#333" stroke-width="1.1"/><rect x="17.4" y="17.4" width="11.4" height="11.2" fill="#fafafa" stroke="#333" stroke-width="1.1"/></svg><svg style="position:absolute;left:1086.9px;top:97.65px;" width="7.8" height="5.3" viewBox="0 0 7.8 5.3" fill="none"><polyline points="1,1 3.9,4.3 6.8,1" stroke="#333" stroke-width="1.5" stroke-linecap="round" stroke-linejoin="round"/></svg><div style="position:absolute;top:118.3px;line-height:16px;font-size:10.5px;color:#1e1e1e;white-space:nowrap;letter-spacing:0.292px;left:921.9px;width:300px;text-align:center;-webkit-text-stroke:0.25px #1e1e1e;">Arrange</div><svg style="position:absolute;left:1102.5px;top:85.5px;" width="30" height="30" viewBox="0 0 30 30" fill="none"><rect x="0.8" y="0.8" width="27.6" height="27" rx="0.8" stroke="#bdbdbd" stroke-width="1"/><path d="M12.6 27.8 H20" stroke="#f5f5f5" stroke-width="3"/><path d="M27.6 11.2 a1.4 1.4 0 0 1 2 1.8 L18.4 26 L15.6 23.6 Z" fill="#f5f5f5" stroke="#c0c0c0" stroke-width="1" stroke-linejoin="round"/><path d="M15.6 23.4 L18.6 26 C17.6 28.8 13 30 8 28.6 C11.4 27.6 11.6 24.2 15.6 23.4 Z" fill="#b9d9f1" stroke="#a4cbea" stroke-width="0.8"/></svg><svg style="position:absolute;left:1137.2px;top:97.25px;" width="7.6" height="5.1" viewBox="0 0 7.6 5.1" fill="none"><polyline points="1,1 3.8,4.1 6.6,1" stroke="#b8b8b8" stroke-width="1.3" stroke-linecap="round" stroke-linejoin="round"/></svg><div style="position:absolute;top:118.3px;line-height:16px;font-size:10.5px;color:#8c8c8c;white-space:nowrap;letter-spacing:0.191px;left:972.3px;width:300px;text-align:center;-webkit-text-stroke:0.25px #8c8c8c;">Quick</div><div style="position:absolute;top:130.3px;line-height:16px;font-size:10.5px;color:#8c8c8c;white-space:nowrap;letter-spacing:0.268px;left:972.3px;width:300px;text-align:center;-webkit-text-stroke:0.25px #8c8c8c;">Styles</div><svg style="position:absolute;left:1154px;top:88.5px;" width="15" height="13" viewBox="0 0 15 13" fill="none"><path d="M5 5.4 L9.4 1 L13 6.2 L8.2 10.8 L3.6 8.4 Z" stroke="#b9b9b9" stroke-width="1" stroke-linejoin="round"/><path d="M9.6 1 V5" stroke="#b9b9b9" stroke-width="0.9"/><path d="M11.2 3.4 C13.4 4.4 13.8 6.6 13.4 9.4" stroke="#a4cbea" stroke-width="1.1"/></svg><div style="position:absolute;left:1153px;top:102px;width:16px;height:3.8px;background:#f3c3a6;"></div><svg style="position:absolute;left:1175.1px;top:95.65px;" width="7.6" height="5.1" viewBox="0 0 7.6 5.1" fill="none"><polyline points="1,1 3.8,4.1 6.6,1" stroke="#b8b8b8" stroke-width="1.3" stroke-linecap="round" stroke-linejoin="round"/></svg><svg style="position:absolute;left:1153px;top:121px;" width="17" height="13" viewBox="0 0 17 13" fill="none"><path d="M6 11.6 H1.2 V1.4 H10" stroke="#b9b9b9" stroke-width="1"/><path d="M5.4 11.4 L6.4 8.2 L13 1.4 a1.3 1.3 0 0 1 2 1.8 L8.4 10.2 Z" fill="#d4e7f6" stroke="#7fb6e2" stroke-width="0.9" stroke-linejoin="round"/></svg><div style="position:absolute;left:1153px;top:134px;width:16px;height:3.8px;background:#b3c3e4;"></div><svg style="position:absolute;left:1175.1px;top:127.45px;" width="7.6" height="5.1" viewBox="0 0 7.6 5.1" fill="none"><polyline points="1,1 3.8,4.1 6.6,1" stroke="#b8b8b8" stroke-width="1.3" stroke-linecap="round" stroke-linejoin="round"/></svg><div style="position:absolute;left:1194.8px;top:86px;width:1px;height:61.6px;background:#d4d4d4;"></div><svg style="position:absolute;left:1216px;top:83.5px;" width="29" height="31" viewBox="0 0 29 31" fill="none"><path d="M12.4 4.8 H1.2 V29.6 H21 V19.4" stroke="#1f86d6" stroke-width="1.2" stroke-linejoin="round"/><g transform="rotate(-40 15 13)"><rect x="3.6" y="9.6" width="13" height="6.8" fill="#f5f5f5" stroke="#1f86d6" stroke-width="1.2"/><rect x="6" y="11.8" width="8.2" height="2.4" stroke="#1f86d6" stroke-width="0.9"/><rect x="17" y="7.4" width="3.4" height="11.2" fill="#1f86d6"/><rect x="20.4" y="8.4" width="5" height="9.2" fill="#f5f5f5" stroke="#1f86d6" stroke-width="1.2"/><rect x="25.4" y="10.4" width="4.4" height="5.2" fill="#f5f5f5" stroke="#1f86d6" stroke-width="1.2"/></g></svg><svg style="position:absolute;left:1247.9px;top:97.65px;" width="7.8" height="5.3" viewBox="0 0 7.8 5.3" fill="none"><polyline points="1,1 3.9,4.3 6.8,1" stroke="#333" stroke-width="1.5" stroke-linecap="round" stroke-linejoin="round"/></svg><div style="position:absolute;top:118.3px;line-height:16px;font-size:10.5px;color:#1e1e1e;white-space:nowrap;letter-spacing:0.349px;left:1083.9px;width:300px;text-align:center;-webkit-text-stroke:0.25px #1e1e1e;">Sensitivity</div><div style="position:absolute;left:1273.2px;top:86px;width:1px;height:61.6px;background:#d4d4d4;"></div><svg style="position:absolute;left:1292px;top:86px;" width="28" height="28" viewBox="0 0 28 28" fill="none"><rect x="0.55" y="0.55" width="26.9" height="26.9" stroke="#d8451b" stroke-width="1.1"/><rect x="4" y="4.4" width="8.6" height="8.4" stroke="#d8451b" stroke-width="1"/><rect x="15.4" y="4.4" width="8.6" height="8.4" stroke="#d8451b" stroke-width="1"/><rect x="4" y="16" width="8.6" height="8.4" stroke="#d8451b" stroke-width="1"/><rect x="15.4" y="16" width="8.6" height="8.4" stroke="#d8451b" stroke-width="1"/></svg><div style="position:absolute;top:118.3px;line-height:16px;font-size:10.5px;color:#1e1e1e;white-space:nowrap;letter-spacing:0.413px;left:1156px;width:300px;text-align:center;-webkit-text-stroke:0.25px #1e1e1e;">Add-ins</div><div style="position:absolute;left:1338px;top:86px;width:1px;height:61.6px;background:#d4d4d4;"></div><svg style="position:absolute;left:1356px;top:83px;" width="32" height="29" viewBox="0 0 32 29" fill="none"><rect x="3.5" y="6.4" width="27" height="21" fill="#fafafa" stroke="#333" stroke-width="1.05"/><rect x="5.7" y="8.6" width="22.7" height="16.7" stroke="#333" stroke-width="0.9"/><path d="M11 13.4 H28.4 M22.4 13.4 V25.3" stroke="#333" stroke-width="0.9"/><path d="M6.9 1.4 H13.5 L9.5 8.4 H13.5 L1.4 20.7 L5.8 11.6 H1.6 Z" fill="#f5f5f5" stroke="#f5f5f5" stroke-width="3"/><path d="M6.9 1.4 H13.5 L9.5 8.4 H13.5 L1.4 20.7 L5.8 11.6 H1.6 Z" fill="#fbdf8e" stroke="#f08a2c" stroke-width="1" stroke-linejoin="round"/></svg><div style="position:absolute;top:118.3px;line-height:16px;font-size:10.5px;color:#1e1e1e;white-space:nowrap;letter-spacing:0.246px;left:1223.4px;width:300px;text-align:center;-webkit-text-stroke:0.25px #1e1e1e;">Designer</div><svg style="position:absolute;left:1404px;top:86px;" width="32" height="28" viewBox="0 0 32 28" fill="none"><defs><linearGradient id="cg1" x1="0" y1="0" x2="0" y2="1"><stop offset="0" stop-color="#2f8ee8"/><stop offset=".45" stop-color="#32b8a8"/><stop offset=".75" stop-color="#b7d23c"/><stop offset="1" stop-color="#f6b93a"/></linearGradient><linearGradient id="cg2" x1="0" y1="0" x2="0" y2="1"><stop offset="0" stop-color="#a36cf0"/><stop offset=".5" stop-color="#e962b0"/><stop offset="1" stop-color="#f7844a"/></linearGradient><linearGradient id="cg3" x1="0" y1="0" x2="1" y2="0"><stop offset="0" stop-color="#1e6fd6"/><stop offset="1" stop-color="#2f8ee8"/></linearGradient></defs><path d="M10.4 1.2 H19 C21.4 1.2 22.6 2.6 23.2 4.6 L24 7.4 H18 C16 7.4 15 8.6 14.4 10.6 L12 19 C11.4 21 10.2 22.4 8 22.4 H5 C2 22.4 0.6 20 1.4 17.2 L4.6 5.6 C5.4 2.8 7.4 1.2 10.4 1.2 Z" fill="url(#cg1)"/><path d="M21.600000000000001 26.8 H13 C10.6 26.8 9.4 25.4 8.8 23.4 L8 20.6 H14 C16 20.6 17 19.4 17.6 17.4 L20 9 C20.6 7 21.8 5.6 24 5.6 H27 C30 5.6 31.4 8 30.6 10.8 L27.4 22.4 C26.6 25.2 24.6 26.8 21.6 26.8 Z" fill="url(#cg2)"/><path d="M14 1.2 H19 C21.4 1.2 22.6 2.6 23.2 4.6 L24 7.4 H18 C16.6 7.4 15.6 8 15 9 Z" fill="url(#cg3)"/></svg><div style="position:absolute;top:118.3px;line-height:16px;font-size:10.5px;color:#1e1e1e;white-space:nowrap;letter-spacing:0.316px;left:1270px;width:300px;text-align:center;-webkit-text-stroke:0.25px #1e1e1e;">Copilot</div><div style="position:absolute;left:8px;top:150.8px;width:1476px;height:1.2px;background:#d2d2d2;"></div><div style="position:absolute;left:257px;top:152px;width:1227px;height:719px;background:#f4f4f4;"></div><div style="position:absolute;left:277.5px;top:167.5px;width:1206.5px;height:698px;background:#f3f3f3;"></div><div style="position:absolute;left:286px;top:176px;width:1198px;height:689.5px;background:#e9e9e9;box-shadow:0 0 6px 3px #eeeeee;"></div><div style="position:absolute;left:309.5px;top:196.5px;width:1150.5px;height:647.5px;box-shadow:0 0 14px 6px rgba(255,255,255,.35),0 0 1px rgba(0,0,0,.18);"></div><div style="position:absolute;left:309.5px;top:196.5px;width:1150.5px;height:647.5px;"><div class="sl"><div class="ti">All Key Results - Cost</div><div class="tb"><div class="c n b hd" style="left:35.5px;top:57.7px;width:344.5px;height:28.765px;line-height:29.365px;background:#f3f4f6;">Name</div><div class="c b hd" style="left:380px;top:57.7px;width:149.5px;height:28.765px;line-height:29.165px;background:#f3f4f6;">Q1</div><div class="c b hd" style="left:529.5px;top:57.7px;width:149.5px;height:28.765px;line-height:29.165px;background:#f3f4f6;">Q2</div><div class="c b hd" style="left:679px;top:57.7px;width:149.5px;height:28.765px;line-height:29.165px;background:#f3f4f6;">Q3</div><div class="c b hd" style="left:828.5px;top:57.7px;width:149.5px;height:28.765px;line-height:29.165px;background:#f3f4f6;">Q4</div><div class="c b hd" style="left:978px;top:57.7px;width:138px;height:28.765px;line-height:29.165px;background:#f3f4f6;">Total</div><div class="c n b w" style="left:35.5px;top:86.465px;width:344.5px;height:28.765px;line-height:29.365px;background:#999999;font-size:13.2px;letter-spacing:0.039px;">All Key Results</div><div class="c b w" style="left:380px;top:86.465px;width:149.5px;height:28.765px;line-height:29.165px;background:#999999;">£1,158,974 (87.7%)</div><div class="c b w" style="left:529.5px;top:86.465px;width:149.5px;height:28.765px;line-height:29.165px;background:#999999;">£29,394 (3.1%)</div><div class="c b w" style="left:679px;top:86.465px;width:149.5px;height:28.765px;line-height:29.165px;background:#999999;">£0 (0.0%)</div><div class="c b w" style="left:828.5px;top:86.465px;width:149.5px;height:28.765px;line-height:29.165px;background:#999999;">£0 (0.0%)</div><div class="c b w" style="left:978px;top:86.465px;width:138px;height:28.765px;line-height:29.165px;background:#999999;">£1,188,368 (86.5%)</div><div class="c n i" style="left:35.5px;top:115.23px;width:344.5px;height:28.765px;line-height:29.365px;font-size:13.5px;letter-spacing:0.225px;">Deploy app store optimization campaign</div><div class="c " style="left:380px;top:115.23px;width:149.5px;height:28.765px;line-height:29.165px;">£111,095 (8.4%)</div><div class="c " style="left:529.5px;top:115.23px;width:149.5px;height:28.765px;line-height:29.165px;">£0 (0.0%)</div><div class="c " style="left:679px;top:115.23px;width:149.5px;height:28.765px;line-height:29.165px;">£0 (0.0%)</div><div class="c " style="left:828.5px;top:115.23px;width:149.5px;height:28.765px;line-height:29.165px;">£0 (0.0%)</div><div class="c b" style="left:978px;top:115.23px;width:138px;height:28.765px;line-height:29.165px;">£111,095 (8.1%)</div><div class="c n i" style="left:35.5px;top:143.995px;width:344.5px;height:28.765px;line-height:29.365px;font-size:13.5px;letter-spacing:0.196px;">Launch referral program with viral loop</div><div class="c " style="left:380px;top:143.995px;width:149.5px;height:28.765px;line-height:29.165px;">£30,061 (2.3%)</div><div class="c " style="left:529.5px;top:143.995px;width:149.5px;height:28.765px;line-height:29.165px;">£0 (0.0%)</div><div class="c " style="left:679px;top:143.995px;width:149.5px;height:28.765px;line-height:29.165px;">£0 (0.0%)</div><div class="c " style="left:828.5px;top:143.995px;width:149.5px;height:28.765px;line-height:29.165px;">£0 (0.0%)</div><div class="c b" style="left:978px;top:143.995px;width:138px;height:28.765px;line-height:29.165px;">£30,061 (2.2%)</div><div class="c n i" style="left:35.5px;top:172.76px;width:344.5px;height:28.765px;line-height:29.365px;font-size:13.5px;letter-spacing:0.205px;">Integrate Swedish payment methods</div><div class="c " style="left:380px;top:172.76px;width:149.5px;height:28.765px;line-height:29.165px;">£0 (0.0%)</div><div class="c " style="left:529.5px;top:172.76px;width:149.5px;height:28.765px;line-height:29.165px;">£0 (0.0%)</div><div class="c " style="left:679px;top:172.76px;width:149.5px;height:28.765px;line-height:29.165px;">£0 (0.0%)</div><div class="c " style="left:828.5px;top:172.76px;width:149.5px;height:28.765px;line-height:29.165px;">£0 (0.0%)</div><div class="c b" style="left:978px;top:172.76px;width:138px;height:28.765px;line-height:29.165px;">£0 (0.0%)</div><div class="c n i" style="left:35.5px;top:201.525px;width:344.5px;height:28.765px;line-height:29.365px;font-size:13.5px;letter-spacing:0.015px;">Support for SEK payments</div><div class="c " style="left:380px;top:201.525px;width:149.5px;height:28.765px;line-height:29.165px;">£84,162 (6.4%)</div><div class="c " style="left:529.5px;top:201.525px;width:149.5px;height:28.765px;line-height:29.165px;">£0 (0.0%)</div><div class="c " style="left:679px;top:201.525px;width:149.5px;height:28.765px;line-height:29.165px;">£0 (0.0%)</div><div class="c " style="left:828.5px;top:201.525px;width:149.5px;height:28.765px;line-height:29.165px;">£0 (0.0%)</div><div class="c b" style="left:978px;top:201.525px;width:138px;height:28.765px;line-height:29.165px;">£84,162 (6.1%)</div><div class="c n i" style="left:35.5px;top:230.29px;width:344.5px;height:28.765px;line-height:29.365px;font-size:13.5px;letter-spacing:0.187px;">Deploy error monitoring &amp; alerting</div><div class="c " style="left:380px;top:230.29px;width:149.5px;height:28.765px;line-height:29.165px;">£0 (0.0%)</div><div class="c " style="left:529.5px;top:230.29px;width:149.5px;height:28.765px;line-height:29.165px;">£0 (0.0%)</div><div class="c " style="left:679px;top:230.29px;width:149.5px;height:28.765px;line-height:29.165px;">£0 (0.0%)</div><div class="c " style="left:828.5px;top:230.29px;width:149.5px;height:28.765px;line-height:29.165px;">£0 (0.0%)</div><div class="c b" style="left:978px;top:230.29px;width:138px;height:28.765px;line-height:29.165px;">£0 (0.0%)</div><div class="c n i" style="left:35.5px;top:259.055px;width:344.5px;height:28.765px;line-height:29.365px;font-size:13.5px;letter-spacing:0.305px;">Implement proactive validation</div><div class="c " style="left:380px;top:259.055px;width:149.5px;height:28.765px;line-height:29.165px;">£0 (0.0%)</div><div class="c " style="left:529.5px;top:259.055px;width:149.5px;height:28.765px;line-height:29.165px;">£0 (0.0%)</div><div class="c " style="left:679px;top:259.055px;width:149.5px;height:28.765px;line-height:29.165px;">£0 (0.0%)</div><div class="c " style="left:828.5px;top:259.055px;width:149.5px;height:28.765px;line-height:29.165px;">£0 (0.0%)</div><div class="c b" style="left:978px;top:259.055px;width:138px;height:28.765px;line-height:29.165px;">£0 (0.0%)</div><div class="c n i" style="left:35.5px;top:287.82px;width:344.5px;height:28.765px;line-height:29.365px;font-size:13.5px;letter-spacing:0.221px;">Build automated error recovery flows</div><div class="c " style="left:380px;top:287.82px;width:149.5px;height:28.765px;line-height:29.165px;">£0 (0.0%)</div><div class="c " style="left:529.5px;top:287.82px;width:149.5px;height:28.765px;line-height:29.165px;">£0 (0.0%)</div><div class="c " style="left:679px;top:287.82px;width:149.5px;height:28.765px;line-height:29.165px;">£0 (0.0%)</div><div class="c " style="left:828.5px;top:287.82px;width:149.5px;height:28.765px;line-height:29.165px;">£0 (0.0%)</div><div class="c b" style="left:978px;top:287.82px;width:138px;height:28.765px;line-height:29.165px;">£0 (0.0%)</div><div class="c n i" style="left:35.5px;top:316.585px;width:344.5px;height:28.765px;line-height:29.365px;font-size:13.5px;letter-spacing:0.213px;">Complete schema migration for 100% of tables</div><div class="c " style="left:380px;top:316.585px;width:149.5px;height:28.765px;line-height:29.165px;">£131,328 (9.9%)</div><div class="c " style="left:529.5px;top:316.585px;width:149.5px;height:28.765px;line-height:29.165px;">£0 (0.0%)</div><div class="c " style="left:679px;top:316.585px;width:149.5px;height:28.765px;line-height:29.165px;">£0 (0.0%)</div><div class="c " style="left:828.5px;top:316.585px;width:149.5px;height:28.765px;line-height:29.165px;">£0 (0.0%)</div><div class="c b" style="left:978px;top:316.585px;width:138px;height:28.765px;line-height:29.165px;">£131,328 (9.6%)</div><div class="c n i" style="left:35.5px;top:345.35px;width:344.5px;height:28.765px;line-height:29.365px;font-size:13.5px;letter-spacing:0.281px;">Deploy win-back campaign automation</div><div class="c " style="left:380px;top:345.35px;width:149.5px;height:28.765px;line-height:29.165px;">£94,848 (7.2%)</div><div class="c " style="left:529.5px;top:345.35px;width:149.5px;height:28.765px;line-height:29.165px;">£0 (0.0%)</div><div class="c " style="left:679px;top:345.35px;width:149.5px;height:28.765px;line-height:29.165px;">£0 (0.0%)</div><div class="c " style="left:828.5px;top:345.35px;width:149.5px;height:28.765px;line-height:29.165px;">£0 (0.0%)</div><div class="c b" style="left:978px;top:345.35px;width:138px;height:28.765px;line-height:29.165px;">£94,848 (6.9%)</div><div class="c n i" style="left:35.5px;top:374.115px;width:344.5px;height:28.765px;line-height:29.365px;font-size:13.5px;letter-spacing:0.236px;">Deploy AI-powered call routing</div><div class="c " style="left:380px;top:374.115px;width:149.5px;height:28.765px;line-height:29.165px;">£75,118 (5.7%)</div><div class="c " style="left:529.5px;top:374.115px;width:149.5px;height:28.765px;line-height:29.165px;">£0 (0.0%)</div><div class="c " style="left:679px;top:374.115px;width:149.5px;height:28.765px;line-height:29.165px;">£0 (0.0%)</div><div class="c " style="left:828.5px;top:374.115px;width:149.5px;height:28.765px;line-height:29.165px;">£0 (0.0%)</div><div class="c b" style="left:978px;top:374.115px;width:138px;height:28.765px;line-height:29.165px;">£75,118 (5.5%)</div><div class="c n i" style="left:35.5px;top:402.88px;width:344.5px;height:28.765px;line-height:29.365px;font-size:13.5px;letter-spacing:0.393px;">Implement click-to-call integration</div><div class="c " style="left:380px;top:402.88px;width:149.5px;height:28.765px;line-height:29.165px;">£101,246 (7.7%)</div><div class="c " style="left:529.5px;top:402.88px;width:149.5px;height:28.765px;line-height:29.165px;">£0 (0.0%)</div><div class="c " style="left:679px;top:402.88px;width:149.5px;height:28.765px;line-height:29.165px;">£0 (0.0%)</div><div class="c " style="left:828.5px;top:402.88px;width:149.5px;height:28.765px;line-height:29.165px;">£0 (0.0%)</div><div class="c b" style="left:978px;top:402.88px;width:138px;height:28.765px;line-height:29.165px;">£101,246 (7.4%)</div><div class="c n i" style="left:35.5px;top:431.645px;width:344.5px;height:28.765px;line-height:29.365px;font-size:13.5px;letter-spacing:0.254px;">Build custom reporting dashboards</div><div class="c " style="left:380px;top:431.645px;width:149.5px;height:28.765px;line-height:29.165px;">£127,374 (9.6%)</div><div class="c " style="left:529.5px;top:431.645px;width:149.5px;height:28.765px;line-height:29.165px;">£0 (0.0%)</div><div class="c " style="left:679px;top:431.645px;width:149.5px;height:28.765px;line-height:29.165px;">£0 (0.0%)</div><div class="c " style="left:828.5px;top:431.645px;width:149.5px;height:28.765px;line-height:29.165px;">£0 (0.0%)</div><div class="c b" style="left:978px;top:431.645px;width:138px;height:28.765px;line-height:29.165px;">£127,374 (9.3%)</div><div class="c n i" style="left:35.5px;top:460.41px;width:344.5px;height:28.765px;line-height:29.365px;font-size:13.5px;letter-spacing:0.159px;">Increase email verification rate to &gt;80%</div><div class="c " style="left:380px;top:460.41px;width:149.5px;height:28.765px;line-height:29.165px;">£57,939 (4.4%)</div><div class="c " style="left:529.5px;top:460.41px;width:149.5px;height:28.765px;line-height:29.165px;">£0 (0.0%)</div><div class="c " style="left:679px;top:460.41px;width:149.5px;height:28.765px;line-height:29.165px;">£0 (0.0%)</div><div class="c " style="left:828.5px;top:460.41px;width:149.5px;height:28.765px;line-height:29.165px;">£0 (0.0%)</div><div class="c b" style="left:978px;top:460.41px;width:138px;height:28.765px;line-height:29.165px;">£57,939 (4.2%)</div><div class="c n i" style="left:35.5px;top:489.175px;width:344.5px;height:28.765px;line-height:29.365px;font-size:13.5px;letter-spacing:0.212px;">Deploy personalized onboarding flows</div><div class="c " style="left:380px;top:489.175px;width:149.5px;height:28.765px;line-height:29.165px;">£244,877 (18.5%)</div><div class="c " style="left:529.5px;top:489.175px;width:149.5px;height:28.765px;line-height:29.165px;">£29,394 (3.1%)</div><div class="c " style="left:679px;top:489.175px;width:149.5px;height:28.765px;line-height:29.165px;">£0 (0.0%)</div><div class="c " style="left:828.5px;top:489.175px;width:149.5px;height:28.765px;line-height:29.165px;">£0 (0.0%)</div><div class="c b" style="left:978px;top:489.175px;width:138px;height:28.765px;line-height:29.165px;">£274,271 (20.0%)</div><div class="c n i" style="left:35.5px;top:517.94px;width:344.5px;height:28.765px;line-height:29.365px;font-size:13.5px;letter-spacing:0.159px;">Reduce sign-up form abandonment to &lt;15%</div><div class="c " style="left:380px;top:517.94px;width:149.5px;height:28.765px;line-height:29.165px;">£100,926 (7.6%)</div><div class="c " style="left:529.5px;top:517.94px;width:149.5px;height:28.765px;line-height:29.165px;">£0 (0.0%)</div><div class="c " style="left:679px;top:517.94px;width:149.5px;height:28.765px;line-height:29.165px;">£0 (0.0%)</div><div class="c " style="left:828.5px;top:517.94px;width:149.5px;height:28.765px;line-height:29.165px;">£0 (0.0%)</div><div class="c b" style="left:978px;top:517.94px;width:138px;height:28.765px;line-height:29.165px;">£100,926 (7.3%)</div><div class="c n it" style="left:35.5px;top:546.705px;width:344.5px;height:28.765px;line-height:29.365px;font-size:13.5px;letter-spacing:0.01px;">WIPs with no Key Results</div><div class="c " style="left:380px;top:546.705px;width:149.5px;height:28.765px;line-height:29.165px;background:#fecaca;">£162,370 (12.3%)</div><div class="c " style="left:529.5px;top:546.705px;width:149.5px;height:28.765px;line-height:29.165px;background:#fecaca;">£23,526 (2.5%)</div><div class="c " style="left:679px;top:546.705px;width:149.5px;height:28.765px;line-height:29.165px;background:#fecaca;">£0 (0.0%)</div><div class="c " style="left:828.5px;top:546.705px;width:149.5px;height:28.765px;line-height:29.165px;background:#fecaca;">£0 (0.0%)</div><div class="c b" style="left:978px;top:546.705px;width:138px;height:28.765px;line-height:29.165px;background:#fecaca;">£185,896 (13.5%)</div><div class="c n it" style="left:35.5px;top:575.47px;width:344.5px;height:28.765px;line-height:29.365px;font-size:13.5px;letter-spacing:0.213px;">Unallocated WIPs</div><div class="c " style="left:380px;top:575.47px;width:149.5px;height:28.765px;line-height:29.165px;background:#e5e7eb;">£0 (0.0%)</div><div class="c " style="left:529.5px;top:575.47px;width:149.5px;height:28.765px;line-height:29.165px;background:#e5e7eb;">£880,436 (0.0%)</div><div class="c " style="left:679px;top:575.47px;width:149.5px;height:28.765px;line-height:29.165px;background:#e5e7eb;">£1,264,512 (0.0%)</div><div class="c " style="left:828.5px;top:575.47px;width:149.5px;height:28.765px;line-height:29.165px;background:#e5e7eb;">£1,265,104 (0.0%)</div><div class="c b" style="left:978px;top:575.47px;width:138px;height:28.765px;line-height:29.165px;background:#e5e7eb;">£3,410,052 (0.0%)</div><div class="c n b w" style="left:35.5px;top:604.235px;width:344.5px;height:28.765px;line-height:29.365px;background:#1f2937;font-size:13.5px;letter-spacing:0.057px;">Total Resources</div><div class="c b w" style="left:380px;top:604.235px;width:149.5px;height:28.765px;line-height:29.165px;background:#374151;">£1,321,344 (0.0%)</div><div class="c b w" style="left:529.5px;top:604.235px;width:149.5px;height:28.765px;line-height:29.165px;background:#374151;">£933,356 (0.0%)</div><div class="c b w" style="left:679px;top:604.235px;width:149.5px;height:28.765px;line-height:29.165px;background:#374151;">£1,264,512 (0.0%)</div><div class="c b w" style="left:828.5px;top:604.235px;width:149.5px;height:28.765px;line-height:29.165px;background:#374151;">£1,265,104 (0.0%)</div><div class="c b w" style="left:978px;top:604.235px;width:138px;height:28.765px;line-height:29.165px;background:#1f2937;">£4,784,316 (0.0%)</div><div class="ln" style="left:34.75px;top:56.8px;width:1082px;height:1.4px"></div><div class="ln" style="left:34.75px;top:85.8px;width:1082px;height:1.4px"></div><div class="ln" style="left:34.75px;top:114.8px;width:1082px;height:1.4px"></div><div class="ln" style="left:34.75px;top:142.8px;width:1082px;height:1.4px"></div><div class="ln" style="left:34.75px;top:171.8px;width:1082px;height:1.4px"></div><div class="ln" style="left:34.75px;top:200.8px;width:1082px;height:1.4px"></div><div class="ln" style="left:34.75px;top:229.8px;width:1082px;height:1.4px"></div><div class="ln" style="left:34.75px;top:258.8px;width:1082px;height:1.4px"></div><div class="ln" style="left:34.75px;top:286.8px;width:1082px;height:1.4px"></div><div class="ln" style="left:34.75px;top:315.8px;width:1082px;height:1.4px"></div><div class="ln" style="left:34.75px;top:344.8px;width:1082px;height:1.4px"></div><div class="ln" style="left:34.75px;top:373.8px;width:1082px;height:1.4px"></div><div class="ln" style="left:34.75px;top:401.8px;width:1082px;height:1.4px"></div><div class="ln" style="left:34.75px;top:430.8px;width:1082px;height:1.4px"></div><div class="ln" style="left:34.75px;top:459.8px;width:1082px;height:1.4px"></div><div class="ln" style="left:34.75px;top:488.8px;width:1082px;height:1.4px"></div><div class="ln" style="left:34.75px;top:516.8px;width:1082px;height:1.4px"></div><div class="ln" style="left:34.75px;top:545.8px;width:1082px;height:1.4px"></div><div class="ln" style="left:34.75px;top:574.8px;width:1082px;height:1.4px"></div><div class="ln" style="left:34.75px;top:603.8px;width:1082px;height:1.4px"></div><div class="ln" style="left:34.75px;top:631.8px;width:1082px;height:1.4px"></div><div class="ln" style="left:34.75px;top:56.75px;width:1.5px;height:576.5px"></div><div class="ln" style="left:379.25px;top:56.75px;width:1.5px;height:576.5px"></div><div class="ln" style="left:528.75px;top:56.75px;width:1.5px;height:576.5px"></div><div class="ln" style="left:678.25px;top:56.75px;width:1.5px;height:576.5px"></div><div class="ln" style="left:827.75px;top:56.75px;width:1.5px;height:576.5px"></div><div class="ln" style="left:977.25px;top:56.75px;width:1.5px;height:576.5px"></div><div class="ln" style="left:1115.25px;top:56.75px;width:1.5px;height:576.5px"></div></div></div></div><div style="position:absolute;left:277.5px;top:152px;width:1206.5px;height:15.5px;background:#fdfdfd;"></div><div style="position:absolute;left:262px;top:152px;width:15.5px;height:713.5px;background:linear-gradient(90deg,#f6f6f6,#ffffff 60%,#fdfdfd);"></div><div style="position:absolute;left:262px;top:152px;width:15.5px;height:15.5px;background:linear-gradient(135deg,#f8f8f8,#e9e9e9);"></div><div style="position:absolute;left:262px;top:167px;width:1222px;height:1px;background:#d9d9d9;"></div><div style="position:absolute;left:277px;top:152px;width:1px;height:713.5px;background:#d9d9d9;"></div><div style="position:absolute;left:317.65px;top:158px;width:1px;height:9px;background:#a9a9a9;"></div><div style="position:absolute;left:328.975px;top:163px;width:1px;height:4px;background:#a9a9a9;"></div><div style="position:absolute;left:340.3px;top:163px;width:1px;height:4px;background:#a9a9a9;"></div><div style="position:absolute;left:351.625px;top:163px;width:1px;height:4px;background:#a9a9a9;"></div><div style="position:absolute;left:362.95px;top:158px;width:1px;height:9px;background:#a9a9a9;"></div><div style="position:absolute;left:374.275px;top:163px;width:1px;height:4px;background:#a9a9a9;"></div><div style="position:absolute;left:385.6px;top:163px;width:1px;height:4px;background:#a9a9a9;"></div><div style="position:absolute;left:396.925px;top:163px;width:1px;height:4px;background:#a9a9a9;"></div><div style="position:absolute;left:408.25px;top:158px;width:1px;height:9px;background:#a9a9a9;"></div><div style="position:absolute;left:419.575px;top:163px;width:1px;height:4px;background:#a9a9a9;"></div><div style="position:absolute;left:430.9px;top:163px;width:1px;height:4px;background:#a9a9a9;"></div><div style="position:absolute;left:442.225px;top:163px;width:1px;height:4px;background:#a9a9a9;"></div><div style="position:absolute;left:453.55px;top:158px;width:1px;height:9px;background:#a9a9a9;"></div><div style="position:absolute;left:464.875px;top:163px;width:1px;height:4px;background:#a9a9a9;"></div><div style="position:absolute;left:476.2px;top:163px;width:1px;height:4px;background:#a9a9a9;"></div><div style="position:absolute;left:487.525px;top:163px;width:1px;height:4px;background:#a9a9a9;"></div><div style="position:absolute;left:498.85px;top:158px;width:1px;height:9px;background:#a9a9a9;"></div><div style="position:absolute;left:510.175px;top:163px;width:1px;height:4px;background:#a9a9a9;"></div><div style="position:absolute;left:521.5px;top:163px;width:1px;height:4px;background:#a9a9a9;"></div><div style="position:absolute;left:532.825px;top:163px;width:1px;height:4px;background:#a9a9a9;"></div><div style="position:absolute;left:544.15px;top:158px;width:1px;height:9px;background:#a9a9a9;"></div><div style="position:absolute;left:555.475px;top:163px;width:1px;height:4px;background:#a9a9a9;"></div><div style="position:absolute;left:566.8px;top:163px;width:1px;height:4px;background:#a9a9a9;"></div><div style="position:absolute;left:578.125px;top:163px;width:1px;height:4px;background:#a9a9a9;"></div><div style="position:absolute;left:589.45px;top:158px;width:1px;height:9px;background:#a9a9a9;"></div><div style="position:absolute;left:600.775px;top:163px;width:1px;height:4px;background:#a9a9a9;"></div><div style="position:absolute;left:612.1px;top:163px;width:1px;height:4px;background:#a9a9a9;"></div><div style="position:absolute;left:623.425px;top:163px;width:1px;height:4px;background:#a9a9a9;"></div><div style="position:absolute;left:634.75px;top:158px;width:1px;height:9px;background:#a9a9a9;"></div><div style="position:absolute;left:646.075px;top:163px;width:1px;height:4px;background:#a9a9a9;"></div><div style="position:absolute;left:657.4px;top:163px;width:1px;height:4px;background:#a9a9a9;"></div><div style="position:absolute;left:668.725px;top:163px;width:1px;height:4px;background:#a9a9a9;"></div><div style="position:absolute;left:680.05px;top:158px;width:1px;height:9px;background:#a9a9a9;"></div><div style="position:absolute;left:691.375px;top:163px;width:1px;height:4px;background:#a9a9a9;"></div><div style="position:absolute;left:702.7px;top:163px;width:1px;height:4px;background:#a9a9a9;"></div><div style="position:absolute;left:714.025px;top:163px;width:1px;height:4px;background:#a9a9a9;"></div><div style="position:absolute;left:725.35px;top:158px;width:1px;height:9px;background:#a9a9a9;"></div><div style="position:absolute;left:736.675px;top:163px;width:1px;height:4px;background:#a9a9a9;"></div><div style="position:absolute;left:748px;top:163px;width:1px;height:4px;background:#a9a9a9;"></div><div style="position:absolute;left:759.325px;top:163px;width:1px;height:4px;background:#a9a9a9;"></div><div style="position:absolute;left:770.65px;top:158px;width:1px;height:9px;background:#a9a9a9;"></div><div style="position:absolute;left:781.975px;top:163px;width:1px;height:4px;background:#a9a9a9;"></div><div style="position:absolute;left:793.3px;top:163px;width:1px;height:4px;background:#a9a9a9;"></div><div style="position:absolute;left:804.625px;top:163px;width:1px;height:4px;background:#a9a9a9;"></div><div style="position:absolute;left:815.95px;top:158px;width:1px;height:9px;background:#a9a9a9;"></div><div style="position:absolute;left:827.275px;top:163px;width:1px;height:4px;background:#a9a9a9;"></div><div style="position:absolute;left:838.6px;top:163px;width:1px;height:4px;background:#a9a9a9;"></div><div style="position:absolute;left:849.925px;top:163px;width:1px;height:4px;background:#a9a9a9;"></div><div style="position:absolute;left:861.25px;top:158px;width:1px;height:9px;background:#a9a9a9;"></div><div style="position:absolute;left:872.575px;top:163px;width:1px;height:4px;background:#a9a9a9;"></div><div style="position:absolute;left:883.9px;top:163px;width:1px;height:4px;background:#a9a9a9;"></div><div style="position:absolute;left:895.225px;top:163px;width:1px;height:4px;background:#a9a9a9;"></div><div style="position:absolute;left:906.55px;top:158px;width:1px;height:9px;background:#a9a9a9;"></div><div style="position:absolute;left:917.875px;top:163px;width:1px;height:4px;background:#a9a9a9;"></div><div style="position:absolute;left:929.2px;top:163px;width:1px;height:4px;background:#a9a9a9;"></div><div style="position:absolute;left:940.525px;top:163px;width:1px;height:4px;background:#a9a9a9;"></div><div style="position:absolute;left:951.85px;top:158px;width:1px;height:9px;background:#a9a9a9;"></div><div style="position:absolute;left:963.175px;top:163px;width:1px;height:4px;background:#a9a9a9;"></div><div style="position:absolute;left:974.5px;top:163px;width:1px;height:4px;background:#a9a9a9;"></div><div style="position:absolute;left:985.825px;top:163px;width:1px;height:4px;background:#a9a9a9;"></div><div style="position:absolute;left:997.15px;top:158px;width:1px;height:9px;background:#a9a9a9;"></div><div style="position:absolute;left:1008.47px;top:163px;width:1px;height:4px;background:#a9a9a9;"></div><div style="position:absolute;left:1019.8px;top:163px;width:1px;height:4px;background:#a9a9a9;"></div><div style="position:absolute;left:1031.12px;top:163px;width:1px;height:4px;background:#a9a9a9;"></div><div style="position:absolute;left:1042.45px;top:158px;width:1px;height:9px;background:#a9a9a9;"></div><div style="position:absolute;left:1053.78px;top:163px;width:1px;height:4px;background:#a9a9a9;"></div><div style="position:absolute;left:1065.1px;top:163px;width:1px;height:4px;background:#a9a9a9;"></div><div style="position:absolute;left:1076.42px;top:163px;width:1px;height:4px;background:#a9a9a9;"></div><div style="position:absolute;left:1087.75px;top:158px;width:1px;height:9px;background:#a9a9a9;"></div><div style="position:absolute;left:1099.08px;top:163px;width:1px;height:4px;background:#a9a9a9;"></div><div style="position:absolute;left:1110.4px;top:163px;width:1px;height:4px;background:#a9a9a9;"></div><div style="position:absolute;left:1121.72px;top:163px;width:1px;height:4px;background:#a9a9a9;"></div><div style="position:absolute;left:1133.05px;top:158px;width:1px;height:9px;background:#a9a9a9;"></div><div style="position:absolute;left:1144.38px;top:163px;width:1px;height:4px;background:#a9a9a9;"></div><div style="position:absolute;left:1155.7px;top:163px;width:1px;height:4px;background:#a9a9a9;"></div><div style="position:absolute;left:1167.03px;top:163px;width:1px;height:4px;background:#a9a9a9;"></div><div style="position:absolute;left:1178.35px;top:158px;width:1px;height:9px;background:#a9a9a9;"></div><div style="position:absolute;left:1189.67px;top:163px;width:1px;height:4px;background:#a9a9a9;"></div><div style="position:absolute;left:1201px;top:163px;width:1px;height:4px;background:#a9a9a9;"></div><div style="position:absolute;left:1212.32px;top:163px;width:1px;height:4px;background:#a9a9a9;"></div><div style="position:absolute;left:1223.65px;top:158px;width:1px;height:9px;background:#a9a9a9;"></div><div style="position:absolute;left:1234.97px;top:163px;width:1px;height:4px;background:#a9a9a9;"></div><div style="position:absolute;left:1246.3px;top:163px;width:1px;height:4px;background:#a9a9a9;"></div><div style="position:absolute;left:1257.62px;top:163px;width:1px;height:4px;background:#a9a9a9;"></div><div style="position:absolute;left:1268.95px;top:158px;width:1px;height:9px;background:#a9a9a9;"></div><div style="position:absolute;left:1280.28px;top:163px;width:1px;height:4px;background:#a9a9a9;"></div><div style="position:absolute;left:1291.6px;top:163px;width:1px;height:4px;background:#a9a9a9;"></div><div style="position:absolute;left:1302.92px;top:163px;width:1px;height:4px;background:#a9a9a9;"></div><div style="position:absolute;left:1314.25px;top:158px;width:1px;height:9px;background:#a9a9a9;"></div><div style="position:absolute;left:1325.57px;top:163px;width:1px;height:4px;background:#a9a9a9;"></div><div style="position:absolute;left:1336.9px;top:163px;width:1px;height:4px;background:#a9a9a9;"></div><div style="position:absolute;left:1348.22px;top:163px;width:1px;height:4px;background:#a9a9a9;"></div><div style="position:absolute;left:1359.55px;top:158px;width:1px;height:9px;background:#a9a9a9;"></div><div style="position:absolute;left:1370.88px;top:163px;width:1px;height:4px;background:#a9a9a9;"></div><div style="position:absolute;left:1382.2px;top:163px;width:1px;height:4px;background:#a9a9a9;"></div><div style="position:absolute;left:1393.52px;top:163px;width:1px;height:4px;background:#a9a9a9;"></div><div style="position:absolute;left:1404.85px;top:158px;width:1px;height:9px;background:#a9a9a9;"></div><div style="position:absolute;left:1416.17px;top:163px;width:1px;height:4px;background:#a9a9a9;"></div><div style="position:absolute;left:1427.5px;top:163px;width:1px;height:4px;background:#a9a9a9;"></div><div style="position:absolute;left:1438.82px;top:163px;width:1px;height:4px;background:#a9a9a9;"></div><div style="position:absolute;left:1450.15px;top:158px;width:1px;height:9px;background:#a9a9a9;"></div><div style="position:absolute;top:149.3px;line-height:16px;font-size:8.8px;color:#6c6c6c;white-space:nowrap;left:190.8px;width:300px;text-align:center;">12</div><div style="position:absolute;top:149.3px;line-height:16px;font-size:8.8px;color:#6c6c6c;white-space:nowrap;left:236.1px;width:300px;text-align:center;">11</div><div style="position:absolute;top:149.3px;line-height:16px;font-size:8.8px;color:#6c6c6c;white-space:nowrap;left:281.4px;width:300px;text-align:center;">10</div><div style="position:absolute;top:149.3px;line-height:16px;font-size:8.8px;color:#6c6c6c;white-space:nowrap;left:326.7px;width:300px;text-align:center;">9</div><div style="position:absolute;top:149.3px;line-height:16px;font-size:8.8px;color:#6c6c6c;white-space:nowrap;left:372px;width:300px;text-align:center;">8</div><div style="position:absolute;top:149.3px;line-height:16px;font-size:8.8px;color:#6c6c6c;white-space:nowrap;left:417.3px;width:300px;text-align:center;">7</div><div style="position:absolute;top:149.3px;line-height:16px;font-size:8.8px;color:#6c6c6c;white-space:nowrap;left:462.6px;width:300px;text-align:center;">6</div><div style="position:absolute;top:149.3px;line-height:16px;font-size:8.8px;color:#6c6c6c;white-space:nowrap;left:507.9px;width:300px;text-align:center;">5</div><div style="position:absolute;top:149.3px;line-height:16px;font-size:8.8px;color:#6c6c6c;white-space:nowrap;left:553.2px;width:300px;text-align:center;">4</div><div style="position:absolute;top:149.3px;line-height:16px;font-size:8.8px;color:#6c6c6c;white-space:nowrap;left:598.5px;width:300px;text-align:center;">3</div><div style="position:absolute;top:149.3px;line-height:16px;font-size:8.8px;color:#6c6c6c;white-space:nowrap;left:643.8px;width:300px;text-align:center;">2</div><div style="position:absolute;top:149.3px;line-height:16px;font-size:8.8px;color:#6c6c6c;white-space:nowrap;left:689.1px;width:300px;text-align:center;">1</div><div style="position:absolute;top:149.3px;line-height:16px;font-size:8.8px;color:#6c6c6c;white-space:nowrap;left:734.4px;width:300px;text-align:center;">0</div><div style="position:absolute;top:149.3px;line-height:16px;font-size:8.8px;color:#6c6c6c;white-space:nowrap;left:779.7px;width:300px;text-align:center;">1</div><div style="position:absolute;top:149.3px;line-height:16px;font-size:8.8px;color:#6c6c6c;white-space:nowrap;left:825px;width:300px;text-align:center;">2</div><div style="position:absolute;top:149.3px;line-height:16px;font-size:8.8px;color:#6c6c6c;white-space:nowrap;left:870.3px;width:300px;text-align:center;">3</div><div style="position:absolute;top:149.3px;line-height:16px;font-size:8.8px;color:#6c6c6c;white-space:nowrap;left:915.6px;width:300px;text-align:center;">4</div><div style="position:absolute;top:149.3px;line-height:16px;font-size:8.8px;color:#6c6c6c;white-space:nowrap;left:960.9px;width:300px;text-align:center;">5</div><div style="position:absolute;top:149.3px;line-height:16px;font-size:8.8px;color:#6c6c6c;white-space:nowrap;left:1006.2px;width:300px;text-align:center;">6</div><div style="position:absolute;top:149.3px;line-height:16px;font-size:8.8px;color:#6c6c6c;white-space:nowrap;left:1051.5px;width:300px;text-align:center;">7</div><div style="position:absolute;top:149.3px;line-height:16px;font-size:8.8px;color:#6c6c6c;white-space:nowrap;left:1096.8px;width:300px;text-align:center;">8</div><div style="position:absolute;top:149.3px;line-height:16px;font-size:8.8px;color:#6c6c6c;white-space:nowrap;left:1142.1px;width:300px;text-align:center;">9</div><div style="position:absolute;top:149.3px;line-height:16px;font-size:8.8px;color:#6c6c6c;white-space:nowrap;left:1187.4px;width:300px;text-align:center;">10</div><div style="position:absolute;top:149.3px;line-height:16px;font-size:8.8px;color:#6c6c6c;white-space:nowrap;left:1232.7px;width:300px;text-align:center;">11</div><div style="position:absolute;top:149.3px;line-height:16px;font-size:8.8px;color:#6c6c6c;white-space:nowrap;left:1278px;width:300px;text-align:center;">12</div><div style="position:absolute;left:309px;top:155.5px;width:1px;height:15px;background:#a9a9a9;"></div><div style="position:absolute;left:1458.4px;top:155.5px;width:1px;height:15px;background:#a9a9a9;"></div><div style="position:absolute;left:273px;top:201.4px;width:4px;height:1px;background:#a9a9a9;"></div><div style="position:absolute;left:273px;top:212.725px;width:4px;height:1px;background:#a9a9a9;"></div><div style="position:absolute;left:268px;top:224.05px;width:9px;height:1px;background:#a9a9a9;"></div><div style="position:absolute;left:273px;top:235.375px;width:4px;height:1px;background:#a9a9a9;"></div><div style="position:absolute;left:273px;top:246.7px;width:4px;height:1px;background:#a9a9a9;"></div><div style="position:absolute;left:273px;top:258.025px;width:4px;height:1px;background:#a9a9a9;"></div><div style="position:absolute;left:268px;top:269.35px;width:9px;height:1px;background:#a9a9a9;"></div><div style="position:absolute;left:273px;top:280.675px;width:4px;height:1px;background:#a9a9a9;"></div><div style="position:absolute;left:273px;top:292px;width:4px;height:1px;background:#a9a9a9;"></div><div style="position:absolute;left:273px;top:303.325px;width:4px;height:1px;background:#a9a9a9;"></div><div style="position:absolute;left:268px;top:314.65px;width:9px;height:1px;background:#a9a9a9;"></div><div style="position:absolute;left:273px;top:325.975px;width:4px;height:1px;background:#a9a9a9;"></div><div style="position:absolute;left:273px;top:337.3px;width:4px;height:1px;background:#a9a9a9;"></div><div style="position:absolute;left:273px;top:348.625px;width:4px;height:1px;background:#a9a9a9;"></div><div style="position:absolute;left:268px;top:359.95px;width:9px;height:1px;background:#a9a9a9;"></div><div style="position:absolute;left:273px;top:371.275px;width:4px;height:1px;background:#a9a9a9;"></div><div style="position:absolute;left:273px;top:382.6px;width:4px;height:1px;background:#a9a9a9;"></div><div style="position:absolute;left:273px;top:393.925px;width:4px;height:1px;background:#a9a9a9;"></div><div style="position:absolute;left:268px;top:405.25px;width:9px;height:1px;background:#a9a9a9;"></div><div style="position:absolute;left:273px;top:416.575px;width:4px;height:1px;background:#a9a9a9;"></div><div style="position:absolute;left:273px;top:427.9px;width:4px;height:1px;background:#a9a9a9;"></div><div style="position:absolute;left:273px;top:439.225px;width:4px;height:1px;background:#a9a9a9;"></div><div style="position:absolute;left:268px;top:450.55px;width:9px;height:1px;background:#a9a9a9;"></div><div style="position:absolute;left:273px;top:461.875px;width:4px;height:1px;background:#a9a9a9;"></div><div style="position:absolute;left:273px;top:473.2px;width:4px;height:1px;background:#a9a9a9;"></div><div style="position:absolute;left:273px;top:484.525px;width:4px;height:1px;background:#a9a9a9;"></div><div style="position:absolute;left:268px;top:495.85px;width:9px;height:1px;background:#a9a9a9;"></div><div style="position:absolute;left:273px;top:507.175px;width:4px;height:1px;background:#a9a9a9;"></div><div style="position:absolute;left:273px;top:518.5px;width:4px;height:1px;background:#a9a9a9;"></div><div style="position:absolute;left:273px;top:529.825px;width:4px;height:1px;background:#a9a9a9;"></div><div style="position:absolute;left:268px;top:541.15px;width:9px;height:1px;background:#a9a9a9;"></div><div style="position:absolute;left:273px;top:552.475px;width:4px;height:1px;background:#a9a9a9;"></div><div style="position:absolute;left:273px;top:563.8px;width:4px;height:1px;background:#a9a9a9;"></div><div style="position:absolute;left:273px;top:575.125px;width:4px;height:1px;background:#a9a9a9;"></div><div style="position:absolute;left:268px;top:586.45px;width:9px;height:1px;background:#a9a9a9;"></div><div style="position:absolute;left:273px;top:597.775px;width:4px;height:1px;background:#a9a9a9;"></div><div style="position:absolute;left:273px;top:609.1px;width:4px;height:1px;background:#a9a9a9;"></div><div style="position:absolute;left:273px;top:620.425px;width:4px;height:1px;background:#a9a9a9;"></div><div style="position:absolute;left:268px;top:631.75px;width:9px;height:1px;background:#a9a9a9;"></div><div style="position:absolute;left:273px;top:643.075px;width:4px;height:1px;background:#a9a9a9;"></div><div style="position:absolute;left:273px;top:654.4px;width:4px;height:1px;background:#a9a9a9;"></div><div style="position:absolute;left:273px;top:665.725px;width:4px;height:1px;background:#a9a9a9;"></div><div style="position:absolute;left:268px;top:677.05px;width:9px;height:1px;background:#a9a9a9;"></div><div style="position:absolute;left:273px;top:688.375px;width:4px;height:1px;background:#a9a9a9;"></div><div style="position:absolute;left:273px;top:699.7px;width:4px;height:1px;background:#a9a9a9;"></div><div style="position:absolute;left:273px;top:711.025px;width:4px;height:1px;background:#a9a9a9;"></div><div style="position:absolute;left:268px;top:722.35px;width:9px;height:1px;background:#a9a9a9;"></div><div style="position:absolute;left:273px;top:733.675px;width:4px;height:1px;background:#a9a9a9;"></div><div style="position:absolute;left:273px;top:745px;width:4px;height:1px;background:#a9a9a9;"></div><div style="position:absolute;left:273px;top:756.325px;width:4px;height:1px;background:#a9a9a9;"></div><div style="position:absolute;left:268px;top:767.65px;width:9px;height:1px;background:#a9a9a9;"></div><div style="position:absolute;left:273px;top:778.975px;width:4px;height:1px;background:#a9a9a9;"></div><div style="position:absolute;left:273px;top:790.3px;width:4px;height:1px;background:#a9a9a9;"></div><div style="position:absolute;left:273px;top:801.625px;width:4px;height:1px;background:#a9a9a9;"></div><div style="position:absolute;left:268px;top:812.95px;width:9px;height:1px;background:#a9a9a9;"></div><div style="position:absolute;left:273px;top:824.275px;width:4px;height:1px;background:#a9a9a9;"></div><div style="position:absolute;left:273px;top:835.6px;width:4px;height:1px;background:#a9a9a9;"></div><div style="position:absolute;left:256.6px;top:195.1px;width:20px;height:12px;line-height:12px;text-align:center;font-size:8.8px;color:#6c6c6c;transform:rotate(-90deg)">7</div><div style="position:absolute;left:256.6px;top:240.4px;width:20px;height:12px;line-height:12px;text-align:center;font-size:8.8px;color:#6c6c6c;transform:rotate(-90deg)">6</div><div style="position:absolute;left:256.6px;top:285.7px;width:20px;height:12px;line-height:12px;text-align:center;font-size:8.8px;color:#6c6c6c;transform:rotate(-90deg)">5</div><div style="position:absolute;left:256.6px;top:331px;width:20px;height:12px;line-height:12px;text-align:center;font-size:8.8px;color:#6c6c6c;transform:rotate(-90deg)">4</div><div style="position:absolute;left:256.6px;top:376.3px;width:20px;height:12px;line-height:12px;text-align:center;font-size:8.8px;color:#6c6c6c;transform:rotate(-90deg)">3</div><div style="position:absolute;left:256.6px;top:421.6px;width:20px;height:12px;line-height:12px;text-align:center;font-size:8.8px;color:#6c6c6c;transform:rotate(-90deg)">2</div><div style="position:absolute;left:256.6px;top:466.9px;width:20px;height:12px;line-height:12px;text-align:center;font-size:8.8px;color:#6c6c6c;transform:rotate(-90deg)">1</div><div style="position:absolute;left:256.6px;top:512.2px;width:20px;height:12px;line-height:12px;text-align:center;font-size:8.8px;color:#6c6c6c;transform:rotate(-90deg)">0</div><div style="position:absolute;left:256.6px;top:557.5px;width:20px;height:12px;line-height:12px;text-align:center;font-size:8.8px;color:#6c6c6c;transform:rotate(-90deg)">1</div><div style="position:absolute;left:256.6px;top:602.8px;width:20px;height:12px;line-height:12px;text-align:center;font-size:8.8px;color:#6c6c6c;transform:rotate(-90deg)">2</div><div style="position:absolute;left:256.6px;top:648.1px;width:20px;height:12px;line-height:12px;text-align:center;font-size:8.8px;color:#6c6c6c;transform:rotate(-90deg)">3</div><div style="position:absolute;left:256.6px;top:693.4px;width:20px;height:12px;line-height:12px;text-align:center;font-size:8.8px;color:#6c6c6c;transform:rotate(-90deg)">4</div><div style="position:absolute;left:256.6px;top:738.7px;width:20px;height:12px;line-height:12px;text-align:center;font-size:8.8px;color:#6c6c6c;transform:rotate(-90deg)">5</div><div style="position:absolute;left:256.6px;top:784px;width:20px;height:12px;line-height:12px;text-align:center;font-size:8.8px;color:#6c6c6c;transform:rotate(-90deg)">6</div><div style="position:absolute;left:256.6px;top:829.3px;width:20px;height:12px;line-height:12px;text-align:center;font-size:8.8px;color:#6c6c6c;transform:rotate(-90deg)">7</div><div style="position:absolute;left:266px;top:196px;width:15px;height:1px;background:#a9a9a9;"></div><div style="position:absolute;left:266px;top:842px;width:15px;height:1px;background:#a9a9a9;"></div><div style="position:absolute;left:257px;top:865.3px;width:1227px;height:1px;background:#cfcfcf;"></div><div style="position:absolute;left:257px;top:866.3px;width:1227px;height:4.4px;background:#f7f7f7;"></div><div style="position:absolute;left:8px;top:152px;width:249px;height:718.6px;background:#cddde6;overflow:hidden;"><div style="position:absolute;left:-8px;top:-152px"><div style="position:absolute;top:147.7px;line-height:16px;font-size:13px;color:#3a3a3a;white-space:nowrap;left:18.2px;">4</div><div style="position:absolute;left:39.9px;top:147.4px;width:180.4px;height:101px;border-radius:4.5px;background:#fff;overflow:hidden;box-shadow:0 0 0 0.7px rgba(120,120,120,.45),0 1px 1.5px rgba(0,0,0,.18);"><div class="sl th" style="transform:scale(0.15680)"><div class="ti">Gartner RGT - Cost - By Objectives</div><div class="tb"><div class="c n b hd" style="left:35.5px;top:57.7px;width:344.5px;height:28.765px;line-height:29.365px;background:#f3f4f6;">Name</div><div class="c b hd" style="left:380px;top:57.7px;width:149.5px;height:28.765px;line-height:29.165px;background:#f3f4f6;">Q1</div><div class="c b hd" style="left:529.5px;top:57.7px;width:149.5px;height:28.765px;line-height:29.165px;background:#f3f4f6;">Q2</div><div class="c b hd" style="left:679px;top:57.7px;width:149.5px;height:28.765px;line-height:29.165px;background:#f3f4f6;">Q3</div><div class="c b hd" style="left:828.5px;top:57.7px;width:149.5px;height:28.765px;line-height:29.165px;background:#f3f4f6;">Q4</div><div class="c b hd" style="left:978px;top:57.7px;width:138px;height:28.765px;line-height:29.165px;background:#f3f4f6;">Total</div><div class="c n b w" style="left:35.5px;top:86.465px;width:344.5px;height:28.765px;line-height:29.365px;background:#84cc16;">Run</div><div class="c b w" style="left:380px;top:86.465px;width:149.5px;height:28.765px;line-height:29.165px;background:#84cc16;">£141,156 (10.7%)</div><div class="c b w" style="left:529.5px;top:86.465px;width:149.5px;height:28.765px;line-height:29.165px;background:#84cc16;">£0 (0.0%)</div><div class="c b w" style="left:679px;top:86.465px;width:149.5px;height:28.765px;line-height:29.165px;background:#84cc16;">£0 (0.0%)</div><div class="c b w" style="left:828.5px;top:86.465px;width:149.5px;height:28.765px;line-height:29.165px;background:#84cc16;">£0 (0.0%)</div><div class="c b w" style="left:978px;top:86.465px;width:138px;height:28.765px;line-height:29.165px;background:#84cc16;">£141,156 (10.3%)</div><div class="c n i" style="left:35.5px;top:115.23px;width:344.5px;height:28.765px;line-height:29.365px;color:#a21caf;">Migrate from End-of-Life Postgres</div><div class="c " style="left:380px;top:115.23px;width:149.5px;height:28.765px;line-height:29.165px;">£131,328 (9.9%)</div><div class="c " style="left:529.5px;top:115.23px;width:149.5px;height:28.765px;line-height:29.165px;">£0 (0.0%)</div><div class="c " style="left:679px;top:115.23px;width:149.5px;height:28.765px;line-height:29.165px;">£0 (0.0%)</div><div class="c " style="left:828.5px;top:115.23px;width:149.5px;height:28.765px;line-height:29.165px;">£0 (0.0%)</div><div class="c b" style="left:978px;top:115.23px;width:138px;height:28.765px;line-height:29.165px;">£131,328 (9.6%)</div><div class="c n i" style="left:35.5px;top:143.995px;width:344.5px;height:28.765px;line-height:29.365px;color:#f87171;">Avoid NPS Hits/Detractors in error and refunds</div><div class="c " style="left:380px;top:143.995px;width:149.5px;height:28.765px;line-height:29.165px;">£127,374 (9.6%)</div><div class="c " style="left:529.5px;top:143.995px;width:149.5px;height:28.765px;line-height:29.165px;">£0 (0.0%)</div><div class="c " style="left:679px;top:143.995px;width:149.5px;height:28.765px;line-height:29.165px;">£0 (0.0%)</div><div class="c " style="left:828.5px;top:143.995px;width:149.5px;height:28.765px;line-height:29.165px;">£0 (0.0%)</div><div class="c b" style="left:978px;top:143.995px;width:138px;height:28.765px;line-height:29.165px;">£127,374 (9.3%)</div><div class="c n b w" style="left:35.5px;top:172.76px;width:344.5px;height:28.765px;line-height:29.365px;background:#06b6d4;">Grow</div><div class="c b w" style="left:380px;top:172.76px;width:149.5px;height:28.765px;line-height:29.165px;background:#06b6d4;">£635,713 (48.1%)</div><div class="c b w" style="left:529.5px;top:172.76px;width:149.5px;height:28.765px;line-height:29.165px;background:#06b6d4;">£29,394 (3.1%)</div><div class="c b w" style="left:679px;top:172.76px;width:149.5px;height:28.765px;line-height:29.165px;background:#06b6d4;">£0 (0.0%)</div><div class="c b w" style="left:828.5px;top:172.76px;width:149.5px;height:28.765px;line-height:29.165px;background:#06b6d4;">£0 (0.0%)</div><div class="c b w" style="left:978px;top:172.76px;width:138px;height:28.765px;line-height:29.165px;background:#06b6d4;">£665,107 (48.4%)</div><div class="c n i" style="left:35.5px;top:201.525px;width:344.5px;height:28.765px;line-height:29.365px;color:#f59e0b;">Activate 1000 new customers</div><div class="c " style="left:380px;top:201.525px;width:149.5px;height:28.765px;line-height:29.165px;">£141,156 (10.7%)</div><div class="c " style="left:529.5px;top:201.525px;width:149.5px;height:28.765px;line-height:29.165px;">£0 (0.0%)</div><div class="c " style="left:679px;top:201.525px;width:149.5px;height:28.765px;line-height:29.165px;">£0 (0.0%)</div><div class="c " style="left:828.5px;top:201.525px;width:149.5px;height:28.765px;line-height:29.165px;">£0 (0.0%)</div><div class="c b" style="left:978px;top:201.525px;width:138px;height:28.765px;line-height:29.165px;">£141,156 (10.3%)</div><div class="c n i" style="left:35.5px;top:230.29px;width:344.5px;height:28.765px;line-height:29.365px;color:#0d9488;">Premium access &gt;5,000k</div><div class="c " style="left:380px;top:230.29px;width:149.5px;height:28.765px;line-height:29.165px;">£0 (0.0%)</div><div class="c " style="left:529.5px;top:230.29px;width:149.5px;height:28.765px;line-height:29.165px;">£0 (0.0%)</div><div class="c " style="left:679px;top:230.29px;width:149.5px;height:28.765px;line-height:29.165px;">£0 (0.0%)</div><div class="c " style="left:828.5px;top:230.29px;width:149.5px;height:28.765px;line-height:29.165px;">£0 (0.0%)</div><div class="c b" style="left:978px;top:230.29px;width:138px;height:28.765px;line-height:29.165px;">£0 (0.0%)</div><div class="c n i" style="left:35.5px;top:259.055px;width:344.5px;height:28.765px;line-height:29.365px;color:#facc15;">Increase Churn &gt;15%</div><div class="c " style="left:380px;top:259.055px;width:149.5px;height:28.765px;line-height:29.165px;">£94,848 (7.2%)</div><div class="c " style="left:529.5px;top:259.055px;width:149.5px;height:28.765px;line-height:29.165px;">£0 (0.0%)</div><div class="c " style="left:679px;top:259.055px;width:149.5px;height:28.765px;line-height:29.165px;">£0 (0.0%)</div><div class="c " style="left:828.5px;top:259.055px;width:149.5px;height:28.765px;line-height:29.165px;">£0 (0.0%)</div><div class="c b" style="left:978px;top:259.055px;width:138px;height:28.765px;line-height:29.165px;">£94,848 (6.9%)</div><div class="c n i" style="left:35.5px;top:287.82px;width:344.5px;height:28.765px;line-height:29.365px;color:#a5f3fc;">Convert customer NF &gt;30 Cases</div><div class="c " style="left:380px;top:287.82px;width:149.5px;height:28.765px;line-height:29.165px;">£176,364 (13.3%)</div><div class="c " style="left:529.5px;top:287.82px;width:149.5px;height:28.765px;line-height:29.165px;">£0 (0.0%)</div><div class="c " style="left:679px;top:287.82px;width:149.5px;height:28.765px;line-height:29.165px;">£0 (0.0%)</div><div class="c " style="left:828.5px;top:287.82px;width:149.5px;height:28.765px;line-height:29.165px;">£0 (0.0%)</div><div class="c b" style="left:978px;top:287.82px;width:138px;height:28.765px;line-height:29.165px;">£176,364 (12.8%)</div><div class="c n i" style="left:35.5px;top:316.585px;width:344.5px;height:28.765px;line-height:29.365px;color:#6366f1;">Reduce Sign-up rates by &gt;30%</div><div class="c " style="left:380px;top:316.585px;width:149.5px;height:28.765px;line-height:29.165px;">£345,803 (26.2%)</div><div class="c " style="left:529.5px;top:316.585px;width:149.5px;height:28.765px;line-height:29.165px;">£29,394 (3.1%)</div><div class="c " style="left:679px;top:316.585px;width:149.5px;height:28.765px;line-height:29.165px;">£0 (0.0%)</div><div class="c " style="left:828.5px;top:316.585px;width:149.5px;height:28.765px;line-height:29.165px;">£0 (0.0%)</div><div class="c b" style="left:978px;top:316.585px;width:138px;height:28.765px;line-height:29.165px;">£375,197 (27.3%)</div><div class="c n b w" style="left:35.5px;top:345.35px;width:344.5px;height:28.765px;line-height:29.365px;background:#8b5cf6;">Transform</div><div class="c b w" style="left:380px;top:345.35px;width:149.5px;height:28.765px;line-height:29.165px;background:#8b5cf6;">£382,105 (28.9%)</div><div class="c b w" style="left:529.5px;top:345.35px;width:149.5px;height:28.765px;line-height:29.165px;background:#8b5cf6;">£23,526 (2.5%)</div><div class="c b w" style="left:679px;top:345.35px;width:149.5px;height:28.765px;line-height:29.165px;background:#8b5cf6;">£0 (0.0%)</div><div class="c b w" style="left:828.5px;top:345.35px;width:149.5px;height:28.765px;line-height:29.165px;background:#8b5cf6;">£0 (0.0%)</div><div class="c b w" style="left:978px;top:345.35px;width:138px;height:28.765px;line-height:29.165px;background:#8b5cf6;">£405,631 (29.5%)</div><div class="c n i" style="left:35.5px;top:374.115px;width:344.5px;height:28.765px;line-height:29.365px;color:#22c55e;">Expand into Sweden</div><div class="c " style="left:380px;top:374.115px;width:149.5px;height:28.765px;line-height:29.165px;">£382,105 (28.9%)</div><div class="c " style="left:529.5px;top:374.115px;width:149.5px;height:28.765px;line-height:29.165px;">£23,526 (2.5%)</div><div class="c " style="left:679px;top:374.115px;width:149.5px;height:28.765px;line-height:29.165px;">£0 (0.0%)</div><div class="c " style="left:828.5px;top:374.115px;width:149.5px;height:28.765px;line-height:29.165px;">£0 (0.0%)</div><div class="c b" style="left:978px;top:374.115px;width:138px;height:28.765px;line-height:29.165px;">£405,631 (29.5%)</div><div class="c n it" style="left:35.5px;top:402.88px;width:344.5px;height:28.765px;line-height:29.365px;">Unallocated WIPs</div><div class="c " style="left:380px;top:402.88px;width:149.5px;height:28.765px;line-height:29.165px;background:#e5e7eb;">£0 (0.0%)</div><div class="c " style="left:529.5px;top:402.88px;width:149.5px;height:28.765px;line-height:29.165px;background:#e5e7eb;">£880,436 (0.0%)</div><div class="c " style="left:679px;top:402.88px;width:149.5px;height:28.765px;line-height:29.165px;background:#e5e7eb;">£1,264,512 (0.0%)</div><div class="c " style="left:828.5px;top:402.88px;width:149.5px;height:28.765px;line-height:29.165px;background:#e5e7eb;">£1,265,104 (0.0%)</div><div class="c b" style="left:978px;top:402.88px;width:138px;height:28.765px;line-height:29.165px;background:#e5e7eb;">£3,410,052 (0.0%)</div><div class="c n b w" style="left:35.5px;top:431.645px;width:344.5px;height:28.765px;line-height:29.365px;background:#1f2937;">Total Resources</div><div class="c b w" style="left:380px;top:431.645px;width:149.5px;height:28.765px;line-height:29.165px;background:#374151;">£1,321,344 (0.0%)</div><div class="c b w" style="left:529.5px;top:431.645px;width:149.5px;height:28.765px;line-height:29.165px;background:#374151;">£933,356 (0.0%)</div><div class="c b w" style="left:679px;top:431.645px;width:149.5px;height:28.765px;line-height:29.165px;background:#374151;">£1,264,512 (0.0%)</div><div class="c b w" style="left:828.5px;top:431.645px;width:149.5px;height:28.765px;line-height:29.165px;background:#374151;">£1,265,104 (0.0%)</div><div class="c b w" style="left:978px;top:431.645px;width:138px;height:28.765px;line-height:29.165px;background:#1f2937;">£4,784,316 (0.0%)</div><div class="ln" style="left:34.75px;top:56.8px;width:1082px;height:1.4px"></div><div class="ln" style="left:34.75px;top:85.8px;width:1082px;height:1.4px"></div><div class="ln" style="left:34.75px;top:114.8px;width:1082px;height:1.4px"></div><div class="ln" style="left:34.75px;top:142.8px;width:1082px;height:1.4px"></div><div class="ln" style="left:34.75px;top:171.8px;width:1082px;height:1.4px"></div><div class="ln" style="left:34.75px;top:200.8px;width:1082px;height:1.4px"></div><div class="ln" style="left:34.75px;top:229.8px;width:1082px;height:1.4px"></div><div class="ln" style="left:34.75px;top:258.8px;width:1082px;height:1.4px"></div><div class="ln" style="left:34.75px;top:286.8px;width:1082px;height:1.4px"></div><div class="ln" style="left:34.75px;top:315.8px;width:1082px;height:1.4px"></div><div class="ln" style="left:34.75px;top:344.8px;width:1082px;height:1.4px"></div><div class="ln" style="left:34.75px;top:373.8px;width:1082px;height:1.4px"></div><div class="ln" style="left:34.75px;top:401.8px;width:1082px;height:1.4px"></div><div class="ln" style="left:34.75px;top:430.8px;width:1082px;height:1.4px"></div><div class="ln" style="left:34.75px;top:459.8px;width:1082px;height:1.4px"></div><div class="ln" style="left:34.75px;top:56.75px;width:1.5px;height:404.5px"></div><div class="ln" style="left:379.25px;top:56.75px;width:1.5px;height:404.5px"></div><div class="ln" style="left:528.75px;top:56.75px;width:1.5px;height:404.5px"></div><div class="ln" style="left:678.25px;top:56.75px;width:1.5px;height:404.5px"></div><div class="ln" style="left:827.75px;top:56.75px;width:1.5px;height:404.5px"></div><div class="ln" style="left:977.25px;top:56.75px;width:1.5px;height:404.5px"></div><div class="ln" style="left:1115.25px;top:56.75px;width:1.5px;height:404.5px"></div></div></div></div><div style="position:absolute;top:267.7px;line-height:16px;font-size:13px;color:#3a3a3a;white-space:nowrap;left:18.2px;">5</div><div style="position:absolute;left:39.9px;top:267.4px;width:180.4px;height:101px;border-radius:4.5px;background:#fff;overflow:hidden;box-shadow:0 0 0 0.7px rgba(120,120,120,.45),0 1px 1.5px rgba(0,0,0,.18);"><div class="sl th" style="transform:scale(0.15680)"><div class="ti">Gartner RGT - Capacity - By Objectives</div><div class="tb"><div class="c n b hd" style="left:35.5px;top:57.7px;width:344.5px;height:28.765px;line-height:29.365px;background:#f3f4f6;">Name</div><div class="c b hd" style="left:380px;top:57.7px;width:149.5px;height:28.765px;line-height:29.165px;background:#f3f4f6;">Q1</div><div class="c b hd" style="left:529.5px;top:57.7px;width:149.5px;height:28.765px;line-height:29.165px;background:#f3f4f6;">Q2</div><div class="c b hd" style="left:679px;top:57.7px;width:149.5px;height:28.765px;line-height:29.165px;background:#f3f4f6;">Q3</div><div class="c b hd" style="left:828.5px;top:57.7px;width:149.5px;height:28.765px;line-height:29.165px;background:#f3f4f6;">Q4</div><div class="c b hd" style="left:978px;top:57.7px;width:138px;height:28.765px;line-height:29.165px;background:#f3f4f6;">Total</div><div class="c n b w" style="left:35.5px;top:86.465px;width:344.5px;height:49px;line-height:29.365px;background:#84cc16;">Run</div><div class="c b w" style="left:380px;top:86.465px;width:149.5px;height:49px;line-height:29.165px;background:#84cc16;">17.5 / 81.5 (21.5%)</div><div class="c b w" style="left:529.5px;top:86.465px;width:149.5px;height:49px;line-height:29.165px;background:#84cc16;">0.0 / 60.0 (0.0%)</div><div class="c b w" style="left:679px;top:86.465px;width:149.5px;height:49px;line-height:29.165px;background:#84cc16;">0.0 / 0.0 (0.0%)</div><div class="c b w" style="left:828.5px;top:86.465px;width:149.5px;height:49px;line-height:29.165px;background:#84cc16;">0.0 / 81.5 (0.0%)</div><div class="c b w wr" style="left:978px;top:86.465px;width:138px;height:49px;background:#84cc16;">17.5 / 304.5 (28.5%)</div><div class="c n i" style="left:35.5px;top:135.465px;width:344.5px;height:28.765px;line-height:29.365px;color:#a21caf;">Migrate from End-of-Life Postgres</div><div class="c " style="left:380px;top:135.465px;width:149.5px;height:28.765px;line-height:29.165px;">4.5 / 81.5 (5.5%)</div><div class="c " style="left:529.5px;top:135.465px;width:149.5px;height:28.765px;line-height:29.165px;">0.0 / 60.0 (0.0%)</div><div class="c " style="left:679px;top:135.465px;width:149.5px;height:28.765px;line-height:29.165px;">0.0 / 0.0 (0.0%)</div><div class="c " style="left:828.5px;top:135.465px;width:149.5px;height:28.765px;line-height:29.165px;">0.0 / 81.5 (0.0%)</div><div class="c b" style="left:978px;top:135.465px;width:138px;height:28.765px;line-height:29.165px;">45.5 / 304.5 (8.8%)</div><div class="c n i" style="left:35.5px;top:164.23px;width:344.5px;height:28.765px;line-height:29.365px;color:#f87171;">Avoid NPS Hits/Detractors in error and refunds</div><div class="c " style="left:380px;top:164.23px;width:149.5px;height:28.765px;line-height:29.165px;">4.5 / 81.5 (5.5%)</div><div class="c " style="left:529.5px;top:164.23px;width:149.5px;height:28.765px;line-height:29.165px;">0.0 / 60.0 (0.0%)</div><div class="c " style="left:679px;top:164.23px;width:149.5px;height:28.765px;line-height:29.165px;">0.0 / 0.0 (0.0%)</div><div class="c " style="left:828.5px;top:164.23px;width:149.5px;height:28.765px;line-height:29.165px;">0.0 / 81.5 (0.0%)</div><div class="c b" style="left:978px;top:164.23px;width:138px;height:28.765px;line-height:29.165px;">45.5 / 304.5 (8.8%)</div><div class="c n b w" style="left:35.5px;top:192.995px;width:344.5px;height:49px;line-height:29.365px;background:#06b6d4;">Grow</div><div class="c b w" style="left:380px;top:192.995px;width:149.5px;height:49px;line-height:29.165px;background:#06b6d4;">47.0 / 81.5 (57.7%)</div><div class="c b w" style="left:529.5px;top:192.995px;width:149.5px;height:49px;line-height:29.165px;background:#06b6d4;">2.0 / 60.0 (3.3%)</div><div class="c b w" style="left:679px;top:192.995px;width:149.5px;height:49px;line-height:29.165px;background:#06b6d4;">0.0 / 0.0 (0.0%)</div><div class="c b w" style="left:828.5px;top:192.995px;width:149.5px;height:49px;line-height:29.165px;background:#06b6d4;">0.0 / 81.5 (0.0%)</div><div class="c b w wr" style="left:978px;top:192.995px;width:138px;height:49px;background:#06b6d4;">47.0 / 304.5 (16.1%)</div><div class="c n i" style="left:35.5px;top:241.995px;width:344.5px;height:28.765px;line-height:29.365px;color:#f59e0b;">Activate 1000 new customers</div><div class="c " style="left:380px;top:241.995px;width:149.5px;height:28.765px;line-height:29.165px;">4.5 / 81.5 (5.5%)</div><div class="c " style="left:529.5px;top:241.995px;width:149.5px;height:28.765px;line-height:29.165px;">0.0 / 60.0 (0.0%)</div><div class="c " style="left:679px;top:241.995px;width:149.5px;height:28.765px;line-height:29.165px;">0.0 / 0.0 (0.0%)</div><div class="c " style="left:828.5px;top:241.995px;width:149.5px;height:28.765px;line-height:29.165px;">0.0 / 81.5 (0.0%)</div><div class="c b" style="left:978px;top:241.995px;width:138px;height:28.765px;line-height:29.165px;">45.5 / 304.5 (8.8%)</div><div class="c n i" style="left:35.5px;top:270.76px;width:344.5px;height:28.765px;line-height:29.365px;color:#0d9488;">Premium access &gt;5,000k</div><div class="c " style="left:380px;top:270.76px;width:149.5px;height:28.765px;line-height:29.165px;">4.5 / 81.5 (5.5%)</div><div class="c " style="left:529.5px;top:270.76px;width:149.5px;height:28.765px;line-height:29.165px;">0.0 / 60.0 (0.0%)</div><div class="c " style="left:679px;top:270.76px;width:149.5px;height:28.765px;line-height:29.165px;">0.0 / 0.0 (0.0%)</div><div class="c " style="left:828.5px;top:270.76px;width:149.5px;height:28.765px;line-height:29.165px;">0.0 / 81.5 (0.0%)</div><div class="c b" style="left:978px;top:270.76px;width:138px;height:28.765px;line-height:29.165px;">45.5 / 304.5 (8.8%)</div><div class="c n i" style="left:35.5px;top:299.525px;width:344.5px;height:28.765px;line-height:29.365px;color:#facc15;">Increase Churn &gt;15%</div><div class="c " style="left:380px;top:299.525px;width:149.5px;height:28.765px;line-height:29.165px;">4.5 / 81.5 (5.5%)</div><div class="c " style="left:529.5px;top:299.525px;width:149.5px;height:28.765px;line-height:29.165px;">0.0 / 60.0 (0.0%)</div><div class="c " style="left:679px;top:299.525px;width:149.5px;height:28.765px;line-height:29.165px;">0.0 / 0.0 (0.0%)</div><div class="c " style="left:828.5px;top:299.525px;width:149.5px;height:28.765px;line-height:29.165px;">0.0 / 81.5 (0.0%)</div><div class="c b" style="left:978px;top:299.525px;width:138px;height:28.765px;line-height:29.165px;">45.5 / 304.5 (8.8%)</div><div class="c n i" style="left:35.5px;top:328.29px;width:344.5px;height:28.765px;line-height:29.365px;color:#a5f3fc;">Convert customer NF &gt;30 Cases</div><div class="c " style="left:380px;top:328.29px;width:149.5px;height:28.765px;line-height:29.165px;">4.5 / 81.5 (5.5%)</div><div class="c " style="left:529.5px;top:328.29px;width:149.5px;height:28.765px;line-height:29.165px;">0.0 / 60.0 (0.0%)</div><div class="c " style="left:679px;top:328.29px;width:149.5px;height:28.765px;line-height:29.165px;">0.0 / 0.0 (0.0%)</div><div class="c " style="left:828.5px;top:328.29px;width:149.5px;height:28.765px;line-height:29.165px;">0.0 / 81.5 (0.0%)</div><div class="c b" style="left:978px;top:328.29px;width:138px;height:28.765px;line-height:29.165px;">45.5 / 304.5 (8.8%)</div><div class="c n i" style="left:35.5px;top:357.055px;width:344.5px;height:28.765px;line-height:29.365px;color:#6366f1;">Reduce Sign-up rates by &gt;30%</div><div class="c " style="left:380px;top:357.055px;width:149.5px;height:28.765px;line-height:29.165px;">4.5 / 81.5 (5.5%)</div><div class="c " style="left:529.5px;top:357.055px;width:149.5px;height:28.765px;line-height:29.165px;">0.0 / 60.0 (0.0%)</div><div class="c " style="left:679px;top:357.055px;width:149.5px;height:28.765px;line-height:29.165px;">0.0 / 0.0 (0.0%)</div><div class="c " style="left:828.5px;top:357.055px;width:149.5px;height:28.765px;line-height:29.165px;">0.0 / 81.5 (0.0%)</div><div class="c b" style="left:978px;top:357.055px;width:138px;height:28.765px;line-height:29.165px;">45.5 / 304.5 (8.8%)</div><div class="c n b w" style="left:35.5px;top:385.82px;width:344.5px;height:38px;line-height:29.365px;background:#8b5cf6;">Transform</div><div class="c b w" style="left:380px;top:385.82px;width:149.5px;height:38px;line-height:29.165px;background:#8b5cf6;">26.5 / 81.5 (32.5%)</div><div class="c b w" style="left:529.5px;top:385.82px;width:149.5px;height:38px;line-height:29.165px;background:#8b5cf6;">1.0 / 60.0 (1.7%)</div><div class="c b w" style="left:679px;top:385.82px;width:149.5px;height:38px;line-height:29.165px;background:#8b5cf6;">0.0 / 0.0 (0.0%)</div><div class="c b w" style="left:828.5px;top:385.82px;width:149.5px;height:38px;line-height:29.165px;background:#8b5cf6;">0.0 / 81.5 (0.0%)</div><div class="c b w" style="left:978px;top:385.82px;width:138px;height:38px;line-height:29.165px;background:#8b5cf6;">27.5 / 304.5 (9.0%)</div><div class="c n i" style="left:35.5px;top:423.82px;width:344.5px;height:23.6px;line-height:24.2px;color:#22c55e;">Expand into Sweden</div><div class="c " style="left:380px;top:423.82px;width:149.5px;height:23.6px;line-height:24px;">4.5 / 81.5 (5.5%)</div><div class="c " style="left:529.5px;top:423.82px;width:149.5px;height:23.6px;line-height:24px;">0.0 / 60.0 (0.0%)</div><div class="c " style="left:679px;top:423.82px;width:149.5px;height:23.6px;line-height:24px;">0.0 / 0.0 (0.0%)</div><div class="c " style="left:828.5px;top:423.82px;width:149.5px;height:23.6px;line-height:24px;">0.0 / 81.5 (0.0%)</div><div class="c b" style="left:978px;top:423.82px;width:138px;height:23.6px;line-height:24px;">45.5 / 304.5 (8.8%)</div><div class="c n it" style="left:35.5px;top:447.42px;width:344.5px;height:39.5px;line-height:29.365px;">Unallocated WIPs</div><div class="c " style="left:380px;top:447.42px;width:149.5px;height:39.5px;line-height:29.165px;background:#e5e7eb;">0.0 / 81.5 (0.0%)</div><div class="c " style="left:529.5px;top:447.42px;width:149.5px;height:39.5px;line-height:29.165px;background:#e5e7eb;">57.0 / 60.0 (95.0%)</div><div class="c " style="left:679px;top:447.42px;width:149.5px;height:39.5px;line-height:29.165px;background:#e5e7eb;">79.5 / 79.5 (100%)</div><div class="c " style="left:828.5px;top:447.42px;width:149.5px;height:39.5px;line-height:29.165px;background:#e5e7eb;">79.5 / 81.5 (97.5%)</div><div class="c b wr" style="left:978px;top:447.42px;width:138px;height:39.5px;background:#e5e7eb;">295.5 / 304.5 (0.0%)</div><div class="c n b w" style="left:35.5px;top:486.92px;width:344.5px;height:58px;line-height:29.365px;background:#1f2937;">Total Resources</div><div class="c b w" style="left:380px;top:486.92px;width:149.5px;height:58px;line-height:29.165px;background:#374151;">79.5 / 81.5 (0.0%)</div><div class="c b w" style="left:529.5px;top:486.92px;width:149.5px;height:58px;line-height:29.165px;background:#374151;">60.0 / 60.0 (0.0%)</div><div class="c b w" style="left:679px;top:486.92px;width:149.5px;height:58px;line-height:29.165px;background:#374151;">79.5 / 79.5 (0.0%)</div><div class="c b w" style="left:828.5px;top:486.92px;width:149.5px;height:58px;line-height:29.165px;background:#374151;">79.5 / 81.5 (0.0%)</div><div class="c b w wr" style="left:978px;top:486.92px;width:138px;height:58px;background:#1f2937;">304.5 / 304.5 (0.0%)</div><div class="ln" style="left:34.75px;top:56.8px;width:1082px;height:1.4px"></div><div class="ln" style="left:34.75px;top:85.8px;width:1082px;height:1.4px"></div><div class="ln" style="left:34.75px;top:134.8px;width:1082px;height:1.4px"></div><div class="ln" style="left:34.75px;top:163.8px;width:1082px;height:1.4px"></div><div class="ln" style="left:34.75px;top:191.8px;width:1082px;height:1.4px"></div><div class="ln" style="left:34.75px;top:240.8px;width:1082px;height:1.4px"></div><div class="ln" style="left:34.75px;top:269.8px;width:1082px;height:1.4px"></div><div class="ln" style="left:34.75px;top:298.8px;width:1082px;height:1.4px"></div><div class="ln" style="left:34.75px;top:327.8px;width:1082px;height:1.4px"></div><div class="ln" style="left:34.75px;top:356.8px;width:1082px;height:1.4px"></div><div class="ln" style="left:34.75px;top:384.8px;width:1082px;height:1.4px"></div><div class="ln" style="left:34.75px;top:422.8px;width:1082px;height:1.4px"></div><div class="ln" style="left:34.75px;top:446.8px;width:1082px;height:1.4px"></div><div class="ln" style="left:34.75px;top:485.8px;width:1082px;height:1.4px"></div><div class="ln" style="left:34.75px;top:543.8px;width:1082px;height:1.4px"></div><div class="ln" style="left:34.75px;top:56.75px;width:1.5px;height:488.5px"></div><div class="ln" style="left:379.25px;top:56.75px;width:1.5px;height:488.5px"></div><div class="ln" style="left:528.75px;top:56.75px;width:1.5px;height:488.5px"></div><div class="ln" style="left:678.25px;top:56.75px;width:1.5px;height:488.5px"></div><div class="ln" style="left:827.75px;top:56.75px;width:1.5px;height:488.5px"></div><div class="ln" style="left:977.25px;top:56.75px;width:1.5px;height:488.5px"></div><div class="ln" style="left:1115.25px;top:56.75px;width:1.5px;height:488.5px"></div></div></div></div><div style="position:absolute;top:387.7px;line-height:16px;font-size:13px;color:#3a3a3a;white-space:nowrap;left:18.2px;">6</div><div style="position:absolute;left:39.9px;top:387.4px;width:180.4px;height:101px;border-radius:4.5px;background:#fff;overflow:hidden;box-shadow:0 0 0 0.7px rgba(120,120,120,.45),0 1px 1.5px rgba(0,0,0,.18);"><div class="sl th" style="transform:scale(0.15680)"><div class="ti">Opex vs Capex - Cost - By Objectives</div><div class="tb"><div class="c n b hd" style="left:35.5px;top:57.7px;width:344.5px;height:28.765px;line-height:29.365px;background:#f3f4f6;">Name</div><div class="c b hd" style="left:380px;top:57.7px;width:149.5px;height:28.765px;line-height:29.165px;background:#f3f4f6;">Q1</div><div class="c b hd" style="left:529.5px;top:57.7px;width:149.5px;height:28.765px;line-height:29.165px;background:#f3f4f6;">Q2</div><div class="c b hd" style="left:679px;top:57.7px;width:149.5px;height:28.765px;line-height:29.165px;background:#f3f4f6;">Q3</div><div class="c b hd" style="left:828.5px;top:57.7px;width:149.5px;height:28.765px;line-height:29.165px;background:#f3f4f6;">Q4</div><div class="c b hd" style="left:978px;top:57.7px;width:138px;height:28.765px;line-height:29.165px;background:#f3f4f6;">Total</div><div class="c n it" style="left:35.5px;top:86.465px;width:344.5px;height:28.765px;line-height:29.365px;">Untagged</div><div class="c " style="left:380px;top:86.465px;width:149.5px;height:28.765px;line-height:29.165px;background:#fef3c7;">£1,321,344 (100.0%)</div><div class="c " style="left:529.5px;top:86.465px;width:149.5px;height:28.765px;line-height:29.165px;background:#fef3c7;">£52,920 (5.7%)</div><div class="c " style="left:679px;top:86.465px;width:149.5px;height:28.765px;line-height:29.165px;background:#fef3c7;">£0 (0.0%)</div><div class="c " style="left:828.5px;top:86.465px;width:149.5px;height:28.765px;line-height:29.165px;background:#fef3c7;">£0 (0.0%)</div><div class="c b" style="left:978px;top:86.465px;width:138px;height:28.765px;line-height:29.165px;background:#fef3c7;">£1,374,264 (100.0%)</div><div class="c n it" style="left:35.5px;top:115.23px;width:344.5px;height:28.765px;line-height:29.365px;">Unallocated WIPs</div><div class="c " style="left:380px;top:115.23px;width:149.5px;height:28.765px;line-height:29.165px;background:#e5e7eb;">£0 (0.0%)</div><div class="c " style="left:529.5px;top:115.23px;width:149.5px;height:28.765px;line-height:29.165px;background:#e5e7eb;">£880,436 (0.0%)</div><div class="c " style="left:679px;top:115.23px;width:149.5px;height:28.765px;line-height:29.165px;background:#e5e7eb;">£1,264,512 (0.0%)</div><div class="c " style="left:828.5px;top:115.23px;width:149.5px;height:28.765px;line-height:29.165px;background:#e5e7eb;">£1,265,104 (0.0%)</div><div class="c b" style="left:978px;top:115.23px;width:138px;height:28.765px;line-height:29.165px;background:#e5e7eb;">£3,410,052 (0.0%)</div><div class="c n b w" style="left:35.5px;top:143.995px;width:344.5px;height:28.765px;line-height:29.365px;background:#1f2937;">Total Resources</div><div class="c b w" style="left:380px;top:143.995px;width:149.5px;height:28.765px;line-height:29.165px;background:#374151;">£1,321,344 (0.0%)</div><div class="c b w" style="left:529.5px;top:143.995px;width:149.5px;height:28.765px;line-height:29.165px;background:#374151;">£933,356 (0.0%)</div><div class="c b w" style="left:679px;top:143.995px;width:149.5px;height:28.765px;line-height:29.165px;background:#374151;">£1,264,512 (0.0%)</div><div class="c b w" style="left:828.5px;top:143.995px;width:149.5px;height:28.765px;line-height:29.165px;background:#374151;">£1,265,104 (0.0%)</div><div class="c b w" style="left:978px;top:143.995px;width:138px;height:28.765px;line-height:29.165px;background:#1f2937;">£4,784,316 (0.0%)</div><div class="ln" style="left:34.75px;top:56.8px;width:1082px;height:1.4px"></div><div class="ln" style="left:34.75px;top:85.8px;width:1082px;height:1.4px"></div><div class="ln" style="left:34.75px;top:114.8px;width:1082px;height:1.4px"></div><div class="ln" style="left:34.75px;top:142.8px;width:1082px;height:1.4px"></div><div class="ln" style="left:34.75px;top:171.8px;width:1082px;height:1.4px"></div><div class="ln" style="left:34.75px;top:56.75px;width:1.5px;height:116.5px"></div><div class="ln" style="left:379.25px;top:56.75px;width:1.5px;height:116.5px"></div><div class="ln" style="left:528.75px;top:56.75px;width:1.5px;height:116.5px"></div><div class="ln" style="left:678.25px;top:56.75px;width:1.5px;height:116.5px"></div><div class="ln" style="left:827.75px;top:56.75px;width:1.5px;height:116.5px"></div><div class="ln" style="left:977.25px;top:56.75px;width:1.5px;height:116.5px"></div><div class="ln" style="left:1115.25px;top:56.75px;width:1.5px;height:116.5px"></div></div></div></div><div style="position:absolute;top:507.7px;line-height:16px;font-size:13px;color:#3a3a3a;white-space:nowrap;left:18.2px;">7</div><div style="position:absolute;left:39.9px;top:507.4px;width:180.4px;height:101px;border-radius:4.5px;background:#fff;overflow:hidden;box-shadow:0 0 0 0.7px rgba(120,120,120,.45),0 1px 1.5px rgba(0,0,0,.18);"><div class="sl th" style="transform:scale(0.15680)"><div class="ti">Opex vs Capex - Capacity - By Objectives</div><div class="tb"><div class="c n b hd" style="left:35.5px;top:57.7px;width:344.5px;height:28.765px;line-height:29.365px;background:#f3f4f6;">Name</div><div class="c b hd" style="left:380px;top:57.7px;width:149.5px;height:28.765px;line-height:29.165px;background:#f3f4f6;">Q1</div><div class="c b hd" style="left:529.5px;top:57.7px;width:149.5px;height:28.765px;line-height:29.165px;background:#f3f4f6;">Q2</div><div class="c b hd" style="left:679px;top:57.7px;width:149.5px;height:28.765px;line-height:29.165px;background:#f3f4f6;">Q3</div><div class="c b hd" style="left:828.5px;top:57.7px;width:149.5px;height:28.765px;line-height:29.165px;background:#f3f4f6;">Q4</div><div class="c b hd" style="left:978px;top:57.7px;width:138px;height:28.765px;line-height:29.165px;background:#f3f4f6;">Total</div><div class="c n it" style="left:35.5px;top:86.465px;width:344.5px;height:43px;line-height:29.365px;">Untagged</div><div class="c " style="left:380px;top:86.465px;width:149.5px;height:43px;line-height:29.165px;background:#fef3c7;">79.5 / 81.5 (97.5%)</div><div class="c " style="left:529.5px;top:86.465px;width:149.5px;height:43px;line-height:29.165px;background:#fef3c7;">3.0 / 60.0 (5.0%)</div><div class="c " style="left:679px;top:86.465px;width:149.5px;height:43px;line-height:29.165px;background:#fef3c7;">0.0 / 0.0 (0.0%)</div><div class="c " style="left:828.5px;top:86.465px;width:149.5px;height:43px;line-height:29.165px;background:#fef3c7;">0.0 / 81.5 (0.0%)</div><div class="c b wr" style="left:978px;top:86.465px;width:138px;height:43px;background:#fef3c7;">82.5 / 304.5 (100.0%)</div><div class="c n it" style="left:35.5px;top:129.465px;width:344.5px;height:43px;line-height:29.365px;">Unallocated WIPs</div><div class="c " style="left:380px;top:129.465px;width:149.5px;height:43px;line-height:29.165px;background:#e5e7eb;">0.0 / 81.5 (0.0%)</div><div class="c " style="left:529.5px;top:129.465px;width:149.5px;height:43px;line-height:29.165px;background:#e5e7eb;">57.0 / 60.0 (95.0%)</div><div class="c " style="left:679px;top:129.465px;width:149.5px;height:43px;line-height:29.165px;background:#e5e7eb;">79.5 / 79.5 (100%)</div><div class="c " style="left:828.5px;top:129.465px;width:149.5px;height:43px;line-height:29.165px;background:#e5e7eb;">79.5 / 81.5 (97.5%)</div><div class="c b wr" style="left:978px;top:129.465px;width:138px;height:43px;background:#e5e7eb;">295.5 / 304.5 (0.0%)</div><div class="c n b w" style="left:35.5px;top:172.465px;width:344.5px;height:57px;line-height:29.365px;background:#1f2937;">Total Resources</div><div class="c b w" style="left:380px;top:172.465px;width:149.5px;height:57px;line-height:29.165px;background:#374151;">79.5 / 81.5 (0.0%)</div><div class="c b w" style="left:529.5px;top:172.465px;width:149.5px;height:57px;line-height:29.165px;background:#374151;">60.0 / 60.0 (0.0%)</div><div class="c b w" style="left:679px;top:172.465px;width:149.5px;height:57px;line-height:29.165px;background:#374151;">79.5 / 79.5 (0.0%)</div><div class="c b w" style="left:828.5px;top:172.465px;width:149.5px;height:57px;line-height:29.165px;background:#374151;">79.5 / 81.5 (0.0%)</div><div class="c b w wr" style="left:978px;top:172.465px;width:138px;height:57px;background:#1f2937;">304.5 / 304.5 (0.0%)</div><div class="ln" style="left:34.75px;top:56.8px;width:1082px;height:1.4px"></div><div class="ln" style="left:34.75px;top:85.8px;width:1082px;height:1.4px"></div><div class="ln" style="left:34.75px;top:128.8px;width:1082px;height:1.4px"></div><div class="ln" style="left:34.75px;top:171.8px;width:1082px;height:1.4px"></div><div class="ln" style="left:34.75px;top:228.8px;width:1082px;height:1.4px"></div><div class="ln" style="left:34.75px;top:56.75px;width:1.5px;height:173.5px"></div><div class="ln" style="left:379.25px;top:56.75px;width:1.5px;height:173.5px"></div><div class="ln" style="left:528.75px;top:56.75px;width:1.5px;height:173.5px"></div><div class="ln" style="left:678.25px;top:56.75px;width:1.5px;height:173.5px"></div><div class="ln" style="left:827.75px;top:56.75px;width:1.5px;height:173.5px"></div><div class="ln" style="left:977.25px;top:56.75px;width:1.5px;height:173.5px"></div><div class="ln" style="left:1115.25px;top:56.75px;width:1.5px;height:173.5px"></div></div></div></div><div style="position:absolute;top:627.7px;line-height:16px;font-size:13px;color:#3a3a3a;white-space:nowrap;left:18.2px;">8</div><div style="position:absolute;left:35.9px;top:623.9px;width:188.4px;height:108.2px;border-radius:7px;background:#b7411f;"></div><div style="position:absolute;left:39.9px;top:627.4px;width:180.4px;height:101px;border-radius:3.5px;background:#fff;overflow:hidden;box-shadow:0 0 0 0.7px rgba(120,120,120,.45),0 1px 1.5px rgba(0,0,0,.18);"><div class="sl th t8" style="transform:scale(0.15680)"><div class="ti">All Key Results - Cost</div><div class="tb"><div class="c n b hd" style="left:35.5px;top:57.7px;width:344.5px;height:28.765px;line-height:29.365px;background:#f3f4f6;">Name</div><div class="c b hd" style="left:380px;top:57.7px;width:149.5px;height:28.765px;line-height:29.165px;background:#f3f4f6;">Q1</div><div class="c b hd" style="left:529.5px;top:57.7px;width:149.5px;height:28.765px;line-height:29.165px;background:#f3f4f6;">Q2</div><div class="c b hd" style="left:679px;top:57.7px;width:149.5px;height:28.765px;line-height:29.165px;background:#f3f4f6;">Q3</div><div class="c b hd" style="left:828.5px;top:57.7px;width:149.5px;height:28.765px;line-height:29.165px;background:#f3f4f6;">Q4</div><div class="c b hd" style="left:978px;top:57.7px;width:138px;height:28.765px;line-height:29.165px;background:#f3f4f6;">Total</div><div class="c n b w" style="left:35.5px;top:86.465px;width:344.5px;height:28.765px;line-height:29.365px;background:#999999;font-size:13.2px;letter-spacing:0.039px;">All Key Results</div><div class="c b w" style="left:380px;top:86.465px;width:149.5px;height:28.765px;line-height:29.165px;background:#999999;">£1,158,974 (87.7%)</div><div class="c b w" style="left:529.5px;top:86.465px;width:149.5px;height:28.765px;line-height:29.165px;background:#999999;">£29,394 (3.1%)</div><div class="c b w" style="left:679px;top:86.465px;width:149.5px;height:28.765px;line-height:29.165px;background:#999999;">£0 (0.0%)</div><div class="c b w" style="left:828.5px;top:86.465px;width:149.5px;height:28.765px;line-height:29.165px;background:#999999;">£0 (0.0%)</div><div class="c b w" style="left:978px;top:86.465px;width:138px;height:28.765px;line-height:29.165px;background:#999999;">£1,188,368 (86.5%)</div><div class="c n i" style="left:35.5px;top:115.23px;width:344.5px;height:28.765px;line-height:29.365px;font-size:13.5px;letter-spacing:0.225px;">Deploy app store optimization campaign</div><div class="c " style="left:380px;top:115.23px;width:149.5px;height:28.765px;line-height:29.165px;">£111,095 (8.4%)</div><div class="c " style="left:529.5px;top:115.23px;width:149.5px;height:28.765px;line-height:29.165px;">£0 (0.0%)</div><div class="c " style="left:679px;top:115.23px;width:149.5px;height:28.765px;line-height:29.165px;">£0 (0.0%)</div><div class="c " style="left:828.5px;top:115.23px;width:149.5px;height:28.765px;line-height:29.165px;">£0 (0.0%)</div><div class="c b" style="left:978px;top:115.23px;width:138px;height:28.765px;line-height:29.165px;">£111,095 (8.1%)</div><div class="c n i" style="left:35.5px;top:143.995px;width:344.5px;height:28.765px;line-height:29.365px;font-size:13.5px;letter-spacing:0.196px;">Launch referral program with viral loop</div><div class="c " style="left:380px;top:143.995px;width:149.5px;height:28.765px;line-height:29.165px;">£30,061 (2.3%)</div><div class="c " style="left:529.5px;top:143.995px;width:149.5px;height:28.765px;line-height:29.165px;">£0 (0.0%)</div><div class="c " style="left:679px;top:143.995px;width:149.5px;height:28.765px;line-height:29.165px;">£0 (0.0%)</div><div class="c " style="left:828.5px;top:143.995px;width:149.5px;height:28.765px;line-height:29.165px;">£0 (0.0%)</div><div class="c b" style="left:978px;top:143.995px;width:138px;height:28.765px;line-height:29.165px;">£30,061 (2.2%)</div><div class="c n i" style="left:35.5px;top:172.76px;width:344.5px;height:28.765px;line-height:29.365px;font-size:13.5px;letter-spacing:0.205px;">Integrate Swedish payment methods</div><div class="c " style="left:380px;top:172.76px;width:149.5px;height:28.765px;line-height:29.165px;">£0 (0.0%)</div><div class="c " style="left:529.5px;top:172.76px;width:149.5px;height:28.765px;line-height:29.165px;">£0 (0.0%)</div><div class="c " style="left:679px;top:172.76px;width:149.5px;height:28.765px;line-height:29.165px;">£0 (0.0%)</div><div class="c " style="left:828.5px;top:172.76px;width:149.5px;height:28.765px;line-height:29.165px;">£0 (0.0%)</div><div class="c b" style="left:978px;top:172.76px;width:138px;height:28.765px;line-height:29.165px;">£0 (0.0%)</div><div class="c n i" style="left:35.5px;top:201.525px;width:344.5px;height:28.765px;line-height:29.365px;font-size:13.5px;letter-spacing:0.015px;">Support for SEK payments</div><div class="c " style="left:380px;top:201.525px;width:149.5px;height:28.765px;line-height:29.165px;">£84,162 (6.4%)</div><div class="c " style="left:529.5px;top:201.525px;width:149.5px;height:28.765px;line-height:29.165px;">£0 (0.0%)</div><div class="c " style="left:679px;top:201.525px;width:149.5px;height:28.765px;line-height:29.165px;">£0 (0.0%)</div><div class="c " style="left:828.5px;top:201.525px;width:149.5px;height:28.765px;line-height:29.165px;">£0 (0.0%)</div><div class="c b" style="left:978px;top:201.525px;width:138px;height:28.765px;line-height:29.165px;">£84,162 (6.1%)</div><div class="c n i" style="left:35.5px;top:230.29px;width:344.5px;height:28.765px;line-height:29.365px;font-size:13.5px;letter-spacing:0.187px;">Deploy error monitoring &amp; alerting</div><div class="c " style="left:380px;top:230.29px;width:149.5px;height:28.765px;line-height:29.165px;">£0 (0.0%)</div><div class="c " style="left:529.5px;top:230.29px;width:149.5px;height:28.765px;line-height:29.165px;">£0 (0.0%)</div><div class="c " style="left:679px;top:230.29px;width:149.5px;height:28.765px;line-height:29.165px;">£0 (0.0%)</div><div class="c " style="left:828.5px;top:230.29px;width:149.5px;height:28.765px;line-height:29.165px;">£0 (0.0%)</div><div class="c b" style="left:978px;top:230.29px;width:138px;height:28.765px;line-height:29.165px;">£0 (0.0%)</div><div class="c n i" style="left:35.5px;top:259.055px;width:344.5px;height:28.765px;line-height:29.365px;font-size:13.5px;letter-spacing:0.305px;">Implement proactive validation</div><div class="c " style="left:380px;top:259.055px;width:149.5px;height:28.765px;line-height:29.165px;">£0 (0.0%)</div><div class="c " style="left:529.5px;top:259.055px;width:149.5px;height:28.765px;line-height:29.165px;">£0 (0.0%)</div><div class="c " style="left:679px;top:259.055px;width:149.5px;height:28.765px;line-height:29.165px;">£0 (0.0%)</div><div class="c " style="left:828.5px;top:259.055px;width:149.5px;height:28.765px;line-height:29.165px;">£0 (0.0%)</div><div class="c b" style="left:978px;top:259.055px;width:138px;height:28.765px;line-height:29.165px;">£0 (0.0%)</div><div class="c n i" style="left:35.5px;top:287.82px;width:344.5px;height:28.765px;line-height:29.365px;font-size:13.5px;letter-spacing:0.221px;">Build automated error recovery flows</div><div class="c " style="left:380px;top:287.82px;width:149.5px;height:28.765px;line-height:29.165px;">£0 (0.0%)</div><div class="c " style="left:529.5px;top:287.82px;width:149.5px;height:28.765px;line-height:29.165px;">£0 (0.0%)</div><div class="c " style="left:679px;top:287.82px;width:149.5px;height:28.765px;line-height:29.165px;">£0 (0.0%)</div><div class="c " style="left:828.5px;top:287.82px;width:149.5px;height:28.765px;line-height:29.165px;">£0 (0.0%)</div><div class="c b" style="left:978px;top:287.82px;width:138px;height:28.765px;line-height:29.165px;">£0 (0.0%)</div><div class="c n i" style="left:35.5px;top:316.585px;width:344.5px;height:28.765px;line-height:29.365px;font-size:13.5px;letter-spacing:0.213px;">Complete schema migration for 100% of tables</div><div class="c " style="left:380px;top:316.585px;width:149.5px;height:28.765px;line-height:29.165px;">£131,328 (9.9%)</div><div class="c " style="left:529.5px;top:316.585px;width:149.5px;height:28.765px;line-height:29.165px;">£0 (0.0%)</div><div class="c " style="left:679px;top:316.585px;width:149.5px;height:28.765px;line-height:29.165px;">£0 (0.0%)</div><div class="c " style="left:828.5px;top:316.585px;width:149.5px;height:28.765px;line-height:29.165px;">£0 (0.0%)</div><div class="c b" style="left:978px;top:316.585px;width:138px;height:28.765px;line-height:29.165px;">£131,328 (9.6%)</div><div class="c n i" style="left:35.5px;top:345.35px;width:344.5px;height:28.765px;line-height:29.365px;font-size:13.5px;letter-spacing:0.281px;">Deploy win-back campaign automation</div><div class="c " style="left:380px;top:345.35px;width:149.5px;height:28.765px;line-height:29.165px;">£94,848 (7.2%)</div><div class="c " style="left:529.5px;top:345.35px;width:149.5px;height:28.765px;line-height:29.165px;">£0 (0.0%)</div><div class="c " style="left:679px;top:345.35px;width:149.5px;height:28.765px;line-height:29.165px;">£0 (0.0%)</div><div class="c " style="left:828.5px;top:345.35px;width:149.5px;height:28.765px;line-height:29.165px;">£0 (0.0%)</div><div class="c b" style="left:978px;top:345.35px;width:138px;height:28.765px;line-height:29.165px;">£94,848 (6.9%)</div><div class="c n i" style="left:35.5px;top:374.115px;width:344.5px;height:28.765px;line-height:29.365px;font-size:13.5px;letter-spacing:0.236px;">Deploy AI-powered call routing</div><div class="c " style="left:380px;top:374.115px;width:149.5px;height:28.765px;line-height:29.165px;">£75,118 (5.7%)</div><div class="c " style="left:529.5px;top:374.115px;width:149.5px;height:28.765px;line-height:29.165px;">£0 (0.0%)</div><div class="c " style="left:679px;top:374.115px;width:149.5px;height:28.765px;line-height:29.165px;">£0 (0.0%)</div><div class="c " style="left:828.5px;top:374.115px;width:149.5px;height:28.765px;line-height:29.165px;">£0 (0.0%)</div><div class="c b" style="left:978px;top:374.115px;width:138px;height:28.765px;line-height:29.165px;">£75,118 (5.5%)</div><div class="c n i" style="left:35.5px;top:402.88px;width:344.5px;height:28.765px;line-height:29.365px;font-size:13.5px;letter-spacing:0.393px;">Implement click-to-call integration</div><div class="c " style="left:380px;top:402.88px;width:149.5px;height:28.765px;line-height:29.165px;">£101,246 (7.7%)</div><div class="c " style="left:529.5px;top:402.88px;width:149.5px;height:28.765px;line-height:29.165px;">£0 (0.0%)</div><div class="c " style="left:679px;top:402.88px;width:149.5px;height:28.765px;line-height:29.165px;">£0 (0.0%)</div><div class="c " style="left:828.5px;top:402.88px;width:149.5px;height:28.765px;line-height:29.165px;">£0 (0.0%)</div><div class="c b" style="left:978px;top:402.88px;width:138px;height:28.765px;line-height:29.165px;">£101,246 (7.4%)</div><div class="c n i" style="left:35.5px;top:431.645px;width:344.5px;height:28.765px;line-height:29.365px;font-size:13.5px;letter-spacing:0.254px;">Build custom reporting dashboards</div><div class="c " style="left:380px;top:431.645px;width:149.5px;height:28.765px;line-height:29.165px;">£127,374 (9.6%)</div><div class="c " style="left:529.5px;top:431.645px;width:149.5px;height:28.765px;line-height:29.165px;">£0 (0.0%)</div><div class="c " style="left:679px;top:431.645px;width:149.5px;height:28.765px;line-height:29.165px;">£0 (0.0%)</div><div class="c " style="left:828.5px;top:431.645px;width:149.5px;height:28.765px;line-height:29.165px;">£0 (0.0%)</div><div class="c b" style="left:978px;top:431.645px;width:138px;height:28.765px;line-height:29.165px;">£127,374 (9.3%)</div><div class="c n i" style="left:35.5px;top:460.41px;width:344.5px;height:28.765px;line-height:29.365px;font-size:13.5px;letter-spacing:0.159px;">Increase email verification rate to &gt;80%</div><div class="c " style="left:380px;top:460.41px;width:149.5px;height:28.765px;line-height:29.165px;">£57,939 (4.4%)</div><div class="c " style="left:529.5px;top:460.41px;width:149.5px;height:28.765px;line-height:29.165px;">£0 (0.0%)</div><div class="c " style="left:679px;top:460.41px;width:149.5px;height:28.765px;line-height:29.165px;">£0 (0.0%)</div><div class="c " style="left:828.5px;top:460.41px;width:149.5px;height:28.765px;line-height:29.165px;">£0 (0.0%)</div><div class="c b" style="left:978px;top:460.41px;width:138px;height:28.765px;line-height:29.165px;">£57,939 (4.2%)</div><div class="c n i" style="left:35.5px;top:489.175px;width:344.5px;height:28.765px;line-height:29.365px;font-size:13.5px;letter-spacing:0.212px;">Deploy personalized onboarding flows</div><div class="c " style="left:380px;top:489.175px;width:149.5px;height:28.765px;line-height:29.165px;">£244,877 (18.5%)</div><div class="c " style="left:529.5px;top:489.175px;width:149.5px;height:28.765px;line-height:29.165px;">£29,394 (3.1%)</div><div class="c " style="left:679px;top:489.175px;width:149.5px;height:28.765px;line-height:29.165px;">£0 (0.0%)</div><div class="c " style="left:828.5px;top:489.175px;width:149.5px;height:28.765px;line-height:29.165px;">£0 (0.0%)</div><div class="c b" style="left:978px;top:489.175px;width:138px;height:28.765px;line-height:29.165px;">£274,271 (20.0%)</div><div class="c n i" style="left:35.5px;top:517.94px;width:344.5px;height:28.765px;line-height:29.365px;font-size:13.5px;letter-spacing:0.159px;">Reduce sign-up form abandonment to &lt;15%</div><div class="c " style="left:380px;top:517.94px;width:149.5px;height:28.765px;line-height:29.165px;">£100,926 (7.6%)</div><div class="c " style="left:529.5px;top:517.94px;width:149.5px;height:28.765px;line-height:29.165px;">£0 (0.0%)</div><div class="c " style="left:679px;top:517.94px;width:149.5px;height:28.765px;line-height:29.165px;">£0 (0.0%)</div><div class="c " style="left:828.5px;top:517.94px;width:149.5px;height:28.765px;line-height:29.165px;">£0 (0.0%)</div><div class="c b" style="left:978px;top:517.94px;width:138px;height:28.765px;line-height:29.165px;">£100,926 (7.3%)</div><div class="c n it" style="left:35.5px;top:546.705px;width:344.5px;height:28.765px;line-height:29.365px;font-size:13.5px;letter-spacing:0.01px;">WIPs with no Key Results</div><div class="c " style="left:380px;top:546.705px;width:149.5px;height:28.765px;line-height:29.165px;background:#fecaca;">£162,370 (12.3%)</div><div class="c " style="left:529.5px;top:546.705px;width:149.5px;height:28.765px;line-height:29.165px;background:#fecaca;">£23,526 (2.5%)</div><div class="c " style="left:679px;top:546.705px;width:149.5px;height:28.765px;line-height:29.165px;background:#fecaca;">£0 (0.0%)</div><div class="c " style="left:828.5px;top:546.705px;width:149.5px;height:28.765px;line-height:29.165px;background:#fecaca;">£0 (0.0%)</div><div class="c b" style="left:978px;top:546.705px;width:138px;height:28.765px;line-height:29.165px;background:#fecaca;">£185,896 (13.5%)</div><div class="c n it" style="left:35.5px;top:575.47px;width:344.5px;height:28.765px;line-height:29.365px;font-size:13.5px;letter-spacing:0.213px;">Unallocated WIPs</div><div class="c " style="left:380px;top:575.47px;width:149.5px;height:28.765px;line-height:29.165px;background:#e5e7eb;">£0 (0.0%)</div><div class="c " style="left:529.5px;top:575.47px;width:149.5px;height:28.765px;line-height:29.165px;background:#e5e7eb;">£880,436 (0.0%)</div><div class="c " style="left:679px;top:575.47px;width:149.5px;height:28.765px;line-height:29.165px;background:#e5e7eb;">£1,264,512 (0.0%)</div><div class="c " style="left:828.5px;top:575.47px;width:149.5px;height:28.765px;line-height:29.165px;background:#e5e7eb;">£1,265,104 (0.0%)</div><div class="c b" style="left:978px;top:575.47px;width:138px;height:28.765px;line-height:29.165px;background:#e5e7eb;">£3,410,052 (0.0%)</div><div class="c n b w" style="left:35.5px;top:604.235px;width:344.5px;height:28.765px;line-height:29.365px;background:#1f2937;font-size:13.5px;letter-spacing:0.057px;">Total Resources</div><div class="c b w" style="left:380px;top:604.235px;width:149.5px;height:28.765px;line-height:29.165px;background:#374151;">£1,321,344 (0.0%)</div><div class="c b w" style="left:529.5px;top:604.235px;width:149.5px;height:28.765px;line-height:29.165px;background:#374151;">£933,356 (0.0%)</div><div class="c b w" style="left:679px;top:604.235px;width:149.5px;height:28.765px;line-height:29.165px;background:#374151;">£1,264,512 (0.0%)</div><div class="c b w" style="left:828.5px;top:604.235px;width:149.5px;height:28.765px;line-height:29.165px;background:#374151;">£1,265,104 (0.0%)</div><div class="c b w" style="left:978px;top:604.235px;width:138px;height:28.765px;line-height:29.165px;background:#1f2937;">£4,784,316 (0.0%)</div><div class="ln" style="left:34.75px;top:56.8px;width:1082px;height:1.4px"></div><div class="ln" style="left:34.75px;top:85.8px;width:1082px;height:1.4px"></div><div class="ln" style="left:34.75px;top:114.8px;width:1082px;height:1.4px"></div><div class="ln" style="left:34.75px;top:142.8px;width:1082px;height:1.4px"></div><div class="ln" style="left:34.75px;top:171.8px;width:1082px;height:1.4px"></div><div class="ln" style="left:34.75px;top:200.8px;width:1082px;height:1.4px"></div><div class="ln" style="left:34.75px;top:229.8px;width:1082px;height:1.4px"></div><div class="ln" style="left:34.75px;top:258.8px;width:1082px;height:1.4px"></div><div class="ln" style="left:34.75px;top:286.8px;width:1082px;height:1.4px"></div><div class="ln" style="left:34.75px;top:315.8px;width:1082px;height:1.4px"></div><div class="ln" style="left:34.75px;top:344.8px;width:1082px;height:1.4px"></div><div class="ln" style="left:34.75px;top:373.8px;width:1082px;height:1.4px"></div><div class="ln" style="left:34.75px;top:401.8px;width:1082px;height:1.4px"></div><div class="ln" style="left:34.75px;top:430.8px;width:1082px;height:1.4px"></div><div class="ln" style="left:34.75px;top:459.8px;width:1082px;height:1.4px"></div><div class="ln" style="left:34.75px;top:488.8px;width:1082px;height:1.4px"></div><div class="ln" style="left:34.75px;top:516.8px;width:1082px;height:1.4px"></div><div class="ln" style="left:34.75px;top:545.8px;width:1082px;height:1.4px"></div><div class="ln" style="left:34.75px;top:574.8px;width:1082px;height:1.4px"></div><div class="ln" style="left:34.75px;top:603.8px;width:1082px;height:1.4px"></div><div class="ln" style="left:34.75px;top:631.8px;width:1082px;height:1.4px"></div><div class="ln" style="left:34.75px;top:56.75px;width:1.5px;height:576.5px"></div><div class="ln" style="left:379.25px;top:56.75px;width:1.5px;height:576.5px"></div><div class="ln" style="left:528.75px;top:56.75px;width:1.5px;height:576.5px"></div><div class="ln" style="left:678.25px;top:56.75px;width:1.5px;height:576.5px"></div><div class="ln" style="left:827.75px;top:56.75px;width:1.5px;height:576.5px"></div><div class="ln" style="left:977.25px;top:56.75px;width:1.5px;height:576.5px"></div><div class="ln" style="left:1115.25px;top:56.75px;width:1.5px;height:576.5px"></div></div></div></div><div style="position:absolute;top:747.7px;line-height:16px;font-size:13px;color:#3a3a3a;white-space:nowrap;left:18.2px;">9</div><div style="position:absolute;left:39.9px;top:747.4px;width:180.4px;height:101px;border-radius:4.5px;background:#fff;overflow:hidden;box-shadow:0 0 0 0.7px rgba(120,120,120,.45),0 1px 1.5px rgba(0,0,0,.18);"><div class="sl th" style="transform:scale(0.15680)"><div class="ti">All Key Results - Capacity</div><div class="tb"><div class="c n b hd" style="left:35.5px;top:57.7px;width:344.5px;height:28.765px;line-height:29.365px;background:#f3f4f6;">Name</div><div class="c b hd" style="left:380px;top:57.7px;width:149.5px;height:28.765px;line-height:29.165px;background:#f3f4f6;">Q1</div><div class="c b hd" style="left:529.5px;top:57.7px;width:149.5px;height:28.765px;line-height:29.165px;background:#f3f4f6;">Q2</div><div class="c b hd" style="left:679px;top:57.7px;width:149.5px;height:28.765px;line-height:29.165px;background:#f3f4f6;">Q3</div><div class="c b hd" style="left:828.5px;top:57.7px;width:149.5px;height:28.765px;line-height:29.165px;background:#f3f4f6;">Q4</div><div class="c b hd" style="left:978px;top:57.7px;width:138px;height:28.765px;line-height:29.165px;background:#f3f4f6;">Total</div><div class="c n b w" style="left:35.5px;top:86.465px;width:344.5px;height:48px;line-height:29.365px;background:#999999;">All Key Results</div><div class="c b w" style="left:380px;top:86.465px;width:149.5px;height:48px;line-height:29.165px;background:#999999;">67.5 / 81.5 (82.8%)</div><div class="c b w" style="left:529.5px;top:86.465px;width:149.5px;height:48px;line-height:29.165px;background:#999999;">2.0 / 60.0 (3.3%)</div><div class="c b w" style="left:679px;top:86.465px;width:149.5px;height:48px;line-height:29.165px;background:#999999;">0.0 / 0.0 (0.0%)</div><div class="c b w" style="left:828.5px;top:86.465px;width:149.5px;height:48px;line-height:29.165px;background:#999999;">0.0 / 81.5 (0.0%)</div><div class="c b w wr" style="left:978px;top:86.465px;width:138px;height:48px;background:#999999;">69.5 / 304.5 (22.8%)</div><div class="c n i" style="left:35.5px;top:134.465px;width:344.5px;height:28.765px;line-height:29.365px;">Deploy app store optimization campaign</div><div class="c " style="left:380px;top:134.465px;width:149.5px;height:28.765px;line-height:29.165px;">4.5 / 81.5 (5.5%)</div><div class="c " style="left:529.5px;top:134.465px;width:149.5px;height:28.765px;line-height:29.165px;">0.0 / 60.0 (0.0%)</div><div class="c " style="left:679px;top:134.465px;width:149.5px;height:28.765px;line-height:29.165px;">0.0 / 0.0 (0.0%)</div><div class="c " style="left:828.5px;top:134.465px;width:149.5px;height:28.765px;line-height:29.165px;">0.0 / 81.5 (0.0%)</div><div class="c b" style="left:978px;top:134.465px;width:138px;height:28.765px;line-height:29.165px;">4.5 / 304.5 (1.5%)</div><div class="c n i" style="left:35.5px;top:163.23px;width:344.5px;height:28.765px;line-height:29.365px;">Launch referral program with viral loop</div><div class="c " style="left:380px;top:163.23px;width:149.5px;height:28.765px;line-height:29.165px;">4.5 / 81.5 (5.5%)</div><div class="c " style="left:529.5px;top:163.23px;width:149.5px;height:28.765px;line-height:29.165px;">0.0 / 60.0 (0.0%)</div><div class="c " style="left:679px;top:163.23px;width:149.5px;height:28.765px;line-height:29.165px;">0.0 / 0.0 (0.0%)</div><div class="c " style="left:828.5px;top:163.23px;width:149.5px;height:28.765px;line-height:29.165px;">0.0 / 81.5 (0.0%)</div><div class="c b" style="left:978px;top:163.23px;width:138px;height:28.765px;line-height:29.165px;">4.5 / 304.5 (1.5%)</div><div class="c n i" style="left:35.5px;top:191.995px;width:344.5px;height:28.765px;line-height:29.365px;">Integrate Swedish payment methods</div><div class="c " style="left:380px;top:191.995px;width:149.5px;height:28.765px;line-height:29.165px;">4.5 / 81.5 (5.5%)</div><div class="c " style="left:529.5px;top:191.995px;width:149.5px;height:28.765px;line-height:29.165px;">0.0 / 60.0 (0.0%)</div><div class="c " style="left:679px;top:191.995px;width:149.5px;height:28.765px;line-height:29.165px;">0.0 / 0.0 (0.0%)</div><div class="c " style="left:828.5px;top:191.995px;width:149.5px;height:28.765px;line-height:29.165px;">0.0 / 81.5 (0.0%)</div><div class="c b" style="left:978px;top:191.995px;width:138px;height:28.765px;line-height:29.165px;">4.5 / 304.5 (1.5%)</div><div class="c n i" style="left:35.5px;top:220.76px;width:344.5px;height:28.765px;line-height:29.365px;">Support for SEK payments</div><div class="c " style="left:380px;top:220.76px;width:149.5px;height:28.765px;line-height:29.165px;">4.5 / 81.5 (5.5%)</div><div class="c " style="left:529.5px;top:220.76px;width:149.5px;height:28.765px;line-height:29.165px;">0.0 / 60.0 (0.0%)</div><div class="c " style="left:679px;top:220.76px;width:149.5px;height:28.765px;line-height:29.165px;">0.0 / 0.0 (0.0%)</div><div class="c " style="left:828.5px;top:220.76px;width:149.5px;height:28.765px;line-height:29.165px;">0.0 / 81.5 (0.0%)</div><div class="c b" style="left:978px;top:220.76px;width:138px;height:28.765px;line-height:29.165px;">4.5 / 304.5 (1.5%)</div><div class="c n i" style="left:35.5px;top:249.525px;width:344.5px;height:28.765px;line-height:29.365px;">Deploy error monitoring &amp; alerting</div><div class="c " style="left:380px;top:249.525px;width:149.5px;height:28.765px;line-height:29.165px;">4.5 / 81.5 (5.5%)</div><div class="c " style="left:529.5px;top:249.525px;width:149.5px;height:28.765px;line-height:29.165px;">0.0 / 60.0 (0.0%)</div><div class="c " style="left:679px;top:249.525px;width:149.5px;height:28.765px;line-height:29.165px;">0.0 / 0.0 (0.0%)</div><div class="c " style="left:828.5px;top:249.525px;width:149.5px;height:28.765px;line-height:29.165px;">0.0 / 81.5 (0.0%)</div><div class="c b" style="left:978px;top:249.525px;width:138px;height:28.765px;line-height:29.165px;">4.5 / 304.5 (1.5%)</div><div class="c n i" style="left:35.5px;top:278.29px;width:344.5px;height:28.765px;line-height:29.365px;">Implement proactive validation</div><div class="c " style="left:380px;top:278.29px;width:149.5px;height:28.765px;line-height:29.165px;">4.5 / 81.5 (5.5%)</div><div class="c " style="left:529.5px;top:278.29px;width:149.5px;height:28.765px;line-height:29.165px;">0.0 / 60.0 (0.0%)</div><div class="c " style="left:679px;top:278.29px;width:149.5px;height:28.765px;line-height:29.165px;">0.0 / 0.0 (0.0%)</div><div class="c " style="left:828.5px;top:278.29px;width:149.5px;height:28.765px;line-height:29.165px;">0.0 / 81.5 (0.0%)</div><div class="c b" style="left:978px;top:278.29px;width:138px;height:28.765px;line-height:29.165px;">4.5 / 304.5 (1.5%)</div><div class="c n i" style="left:35.5px;top:307.055px;width:344.5px;height:28.765px;line-height:29.365px;">Build automated error recovery flows</div><div class="c " style="left:380px;top:307.055px;width:149.5px;height:28.765px;line-height:29.165px;">4.5 / 81.5 (5.5%)</div><div class="c " style="left:529.5px;top:307.055px;width:149.5px;height:28.765px;line-height:29.165px;">0.0 / 60.0 (0.0%)</div><div class="c " style="left:679px;top:307.055px;width:149.5px;height:28.765px;line-height:29.165px;">0.0 / 0.0 (0.0%)</div><div class="c " style="left:828.5px;top:307.055px;width:149.5px;height:28.765px;line-height:29.165px;">0.0 / 81.5 (0.0%)</div><div class="c b" style="left:978px;top:307.055px;width:138px;height:28.765px;line-height:29.165px;">4.5 / 304.5 (1.5%)</div><div class="c n i" style="left:35.5px;top:335.82px;width:344.5px;height:28.765px;line-height:29.365px;">Complete schema migration for 100% of tables</div><div class="c " style="left:380px;top:335.82px;width:149.5px;height:28.765px;line-height:29.165px;">4.5 / 81.5 (5.5%)</div><div class="c " style="left:529.5px;top:335.82px;width:149.5px;height:28.765px;line-height:29.165px;">0.0 / 60.0 (0.0%)</div><div class="c " style="left:679px;top:335.82px;width:149.5px;height:28.765px;line-height:29.165px;">0.0 / 0.0 (0.0%)</div><div class="c " style="left:828.5px;top:335.82px;width:149.5px;height:28.765px;line-height:29.165px;">0.0 / 81.5 (0.0%)</div><div class="c b" style="left:978px;top:335.82px;width:138px;height:28.765px;line-height:29.165px;">4.5 / 304.5 (1.5%)</div><div class="c n i" style="left:35.5px;top:364.585px;width:344.5px;height:28.765px;line-height:29.365px;">Deploy win-back campaign automation</div><div class="c " style="left:380px;top:364.585px;width:149.5px;height:28.765px;line-height:29.165px;">4.5 / 81.5 (5.5%)</div><div class="c " style="left:529.5px;top:364.585px;width:149.5px;height:28.765px;line-height:29.165px;">0.0 / 60.0 (0.0%)</div><div class="c " style="left:679px;top:364.585px;width:149.5px;height:28.765px;line-height:29.165px;">0.0 / 0.0 (0.0%)</div><div class="c " style="left:828.5px;top:364.585px;width:149.5px;height:28.765px;line-height:29.165px;">0.0 / 81.5 (0.0%)</div><div class="c b" style="left:978px;top:364.585px;width:138px;height:28.765px;line-height:29.165px;">4.5 / 304.5 (1.5%)</div><div class="c n i" style="left:35.5px;top:393.35px;width:344.5px;height:28.765px;line-height:29.365px;">Deploy AI-powered call routing</div><div class="c " style="left:380px;top:393.35px;width:149.5px;height:28.765px;line-height:29.165px;">4.5 / 81.5 (5.5%)</div><div class="c " style="left:529.5px;top:393.35px;width:149.5px;height:28.765px;line-height:29.165px;">0.0 / 60.0 (0.0%)</div><div class="c " style="left:679px;top:393.35px;width:149.5px;height:28.765px;line-height:29.165px;">0.0 / 0.0 (0.0%)</div><div class="c " style="left:828.5px;top:393.35px;width:149.5px;height:28.765px;line-height:29.165px;">0.0 / 81.5 (0.0%)</div><div class="c b" style="left:978px;top:393.35px;width:138px;height:28.765px;line-height:29.165px;">4.5 / 304.5 (1.5%)</div><div class="c n i" style="left:35.5px;top:422.115px;width:344.5px;height:28.765px;line-height:29.365px;">Implement click-to-call integration</div><div class="c " style="left:380px;top:422.115px;width:149.5px;height:28.765px;line-height:29.165px;">4.5 / 81.5 (5.5%)</div><div class="c " style="left:529.5px;top:422.115px;width:149.5px;height:28.765px;line-height:29.165px;">0.0 / 60.0 (0.0%)</div><div class="c " style="left:679px;top:422.115px;width:149.5px;height:28.765px;line-height:29.165px;">0.0 / 0.0 (0.0%)</div><div class="c " style="left:828.5px;top:422.115px;width:149.5px;height:28.765px;line-height:29.165px;">0.0 / 81.5 (0.0%)</div><div class="c b" style="left:978px;top:422.115px;width:138px;height:28.765px;line-height:29.165px;">4.5 / 304.5 (1.5%)</div><div class="c n i" style="left:35.5px;top:450.88px;width:344.5px;height:28.765px;line-height:29.365px;">Build custom reporting dashboards</div><div class="c " style="left:380px;top:450.88px;width:149.5px;height:28.765px;line-height:29.165px;">4.5 / 81.5 (5.5%)</div><div class="c " style="left:529.5px;top:450.88px;width:149.5px;height:28.765px;line-height:29.165px;">0.0 / 60.0 (0.0%)</div><div class="c " style="left:679px;top:450.88px;width:149.5px;height:28.765px;line-height:29.165px;">0.0 / 0.0 (0.0%)</div><div class="c " style="left:828.5px;top:450.88px;width:149.5px;height:28.765px;line-height:29.165px;">0.0 / 81.5 (0.0%)</div><div class="c b" style="left:978px;top:450.88px;width:138px;height:28.765px;line-height:29.165px;">4.5 / 304.5 (1.5%)</div><div class="c n i" style="left:35.5px;top:479.645px;width:344.5px;height:28.765px;line-height:29.365px;">Increase email verification rate to &gt;80%</div><div class="c " style="left:380px;top:479.645px;width:149.5px;height:28.765px;line-height:29.165px;">4.5 / 81.5 (5.5%)</div><div class="c " style="left:529.5px;top:479.645px;width:149.5px;height:28.765px;line-height:29.165px;">0.0 / 60.0 (0.0%)</div><div class="c " style="left:679px;top:479.645px;width:149.5px;height:28.765px;line-height:29.165px;">0.0 / 0.0 (0.0%)</div><div class="c " style="left:828.5px;top:479.645px;width:149.5px;height:28.765px;line-height:29.165px;">0.0 / 81.5 (0.0%)</div><div class="c b" style="left:978px;top:479.645px;width:138px;height:28.765px;line-height:29.165px;">4.5 / 304.5 (1.5%)</div><div class="c n i" style="left:35.5px;top:508.41px;width:344.5px;height:28.765px;line-height:29.365px;">Deploy personalized onboarding flows</div><div class="c " style="left:380px;top:508.41px;width:149.5px;height:28.765px;line-height:29.165px;">4.5 / 81.5 (5.5%)</div><div class="c " style="left:529.5px;top:508.41px;width:149.5px;height:28.765px;line-height:29.165px;">0.0 / 60.0 (0.0%)</div><div class="c " style="left:679px;top:508.41px;width:149.5px;height:28.765px;line-height:29.165px;">0.0 / 0.0 (0.0%)</div><div class="c " style="left:828.5px;top:508.41px;width:149.5px;height:28.765px;line-height:29.165px;">0.0 / 81.5 (0.0%)</div><div class="c b" style="left:978px;top:508.41px;width:138px;height:28.765px;line-height:29.165px;">4.5 / 304.5 (1.5%)</div><div class="c n i" style="left:35.5px;top:537.175px;width:344.5px;height:28.765px;line-height:29.365px;">Reduce sign-up form abandonment to &lt;15%</div><div class="c " style="left:380px;top:537.175px;width:149.5px;height:28.765px;line-height:29.165px;">4.5 / 81.5 (5.5%)</div><div class="c " style="left:529.5px;top:537.175px;width:149.5px;height:28.765px;line-height:29.165px;">0.0 / 60.0 (0.0%)</div><div class="c " style="left:679px;top:537.175px;width:149.5px;height:28.765px;line-height:29.165px;">0.0 / 0.0 (0.0%)</div><div class="c " style="left:828.5px;top:537.175px;width:149.5px;height:28.765px;line-height:29.165px;">0.0 / 81.5 (0.0%)</div><div class="c b" style="left:978px;top:537.175px;width:138px;height:28.765px;line-height:29.165px;">4.5 / 304.5 (1.5%)</div><div class="c n it" style="left:35.5px;top:565.94px;width:344.5px;height:28.765px;line-height:29.365px;">WIPs with no Key Results</div><div class="c " style="left:380px;top:565.94px;width:149.5px;height:28.765px;line-height:29.165px;background:#fecaca;">12.0 / 81.5 (14.7%)</div><div class="c " style="left:529.5px;top:565.94px;width:149.5px;height:28.765px;line-height:29.165px;background:#fecaca;">1.0 / 60.0 (1.7%)</div><div class="c " style="left:679px;top:565.94px;width:149.5px;height:28.765px;line-height:29.165px;background:#fecaca;">0.0 / 0.0 (0.0%)</div><div class="c " style="left:828.5px;top:565.94px;width:149.5px;height:28.765px;line-height:29.165px;background:#fecaca;">0.0 / 81.5 (0.0%)</div><div class="c b" style="left:978px;top:565.94px;width:138px;height:28.765px;line-height:29.165px;background:#fecaca;">13.0 / 304.5 (4.3%)</div><div class="c n it" style="left:35.5px;top:594.705px;width:344.5px;height:43px;line-height:29.365px;">Unallocated WIPs</div><div class="c " style="left:380px;top:594.705px;width:149.5px;height:43px;line-height:29.165px;background:#e5e7eb;">0.0 / 81.5 (0.0%)</div><div class="c " style="left:529.5px;top:594.705px;width:149.5px;height:43px;line-height:29.165px;background:#e5e7eb;">57.0 / 60.0 (95.0%)</div><div class="c " style="left:679px;top:594.705px;width:149.5px;height:43px;line-height:29.165px;background:#e5e7eb;">79.5 / 79.5 (100%)</div><div class="c " style="left:828.5px;top:594.705px;width:149.5px;height:43px;line-height:29.165px;background:#e5e7eb;">79.5 / 81.5 (97.5%)</div><div class="c b wr" style="left:978px;top:594.705px;width:138px;height:43px;background:#e5e7eb;">295.5 / 304.5 (0.0%)</div><div class="c n b w" style="left:35.5px;top:637.705px;width:344.5px;height:57px;line-height:29.365px;background:#1f2937;">Total Resources</div><div class="c b w" style="left:380px;top:637.705px;width:149.5px;height:57px;line-height:29.165px;background:#374151;">79.5 / 81.5 (0.0%)</div><div class="c b w" style="left:529.5px;top:637.705px;width:149.5px;height:57px;line-height:29.165px;background:#374151;">60.0 / 60.0 (0.0%)</div><div class="c b w" style="left:679px;top:637.705px;width:149.5px;height:57px;line-height:29.165px;background:#374151;">79.5 / 79.5 (0.0%)</div><div class="c b w" style="left:828.5px;top:637.705px;width:149.5px;height:57px;line-height:29.165px;background:#374151;">79.5 / 81.5 (0.0%)</div><div class="c b w wr" style="left:978px;top:637.705px;width:138px;height:57px;background:#1f2937;">304.5 / 304.5 (0.0%)</div><div class="ln" style="left:34.75px;top:56.8px;width:1082px;height:1.4px"></div><div class="ln" style="left:34.75px;top:85.8px;width:1082px;height:1.4px"></div><div class="ln" style="left:34.75px;top:133.8px;width:1082px;height:1.4px"></div><div class="ln" style="left:34.75px;top:162.8px;width:1082px;height:1.4px"></div><div class="ln" style="left:34.75px;top:190.8px;width:1082px;height:1.4px"></div><div class="ln" style="left:34.75px;top:219.8px;width:1082px;height:1.4px"></div><div class="ln" style="left:34.75px;top:248.8px;width:1082px;height:1.4px"></div><div class="ln" style="left:34.75px;top:277.8px;width:1082px;height:1.4px"></div><div class="ln" style="left:34.75px;top:306.8px;width:1082px;height:1.4px"></div><div class="ln" style="left:34.75px;top:334.8px;width:1082px;height:1.4px"></div><div class="ln" style="left:34.75px;top:363.8px;width:1082px;height:1.4px"></div><div class="ln" style="left:34.75px;top:392.8px;width:1082px;height:1.4px"></div><div class="ln" style="left:34.75px;top:421.8px;width:1082px;height:1.4px"></div><div class="ln" style="left:34.75px;top:449.8px;width:1082px;height:1.4px"></div><div class="ln" style="left:34.75px;top:478.8px;width:1082px;height:1.4px"></div><div class="ln" style="left:34.75px;top:507.8px;width:1082px;height:1.4px"></div><div class="ln" style="left:34.75px;top:536.8px;width:1082px;height:1.4px"></div><div class="ln" style="left:34.75px;top:564.8px;width:1082px;height:1.4px"></div><div class="ln" style="left:34.75px;top:593.8px;width:1082px;height:1.4px"></div><div class="ln" style="left:34.75px;top:636.8px;width:1082px;height:1.4px"></div><div class="ln" style="left:34.75px;top:693.8px;width:1082px;height:1.4px"></div><div class="ln" style="left:34.75px;top:56.75px;width:1.5px;height:638.5px"></div><div class="ln" style="left:379.25px;top:56.75px;width:1.5px;height:638.5px"></div><div class="ln" style="left:528.75px;top:56.75px;width:1.5px;height:638.5px"></div><div class="ln" style="left:678.25px;top:56.75px;width:1.5px;height:638.5px"></div><div class="ln" style="left:827.75px;top:56.75px;width:1.5px;height:638.5px"></div><div class="ln" style="left:977.25px;top:56.75px;width:1.5px;height:638.5px"></div><div class="ln" style="left:1115.25px;top:56.75px;width:1.5px;height:638.5px"></div></div></div></div><div style="position:absolute;top:867.7px;line-height:16px;font-size:13px;color:#3a3a3a;white-space:nowrap;left:18.2px;">10</div><div style="position:absolute;left:39.9px;top:867.4px;width:180.4px;height:101px;border-radius:4.5px;background:#fff;overflow:hidden;box-shadow:0 0 0 0.7px rgba(120,120,120,.45),0 1px 1.5px rgba(0,0,0,.18);"><div class="sl th" style="transform:scale(0.15680)"><div class="ti">Key Results by Objective - Cost</div><div class="tb"><div class="ln" style="left:34.75px;top:56.8px;width:1082px;height:1.4px"></div><div class="ln" style="left:34.75px;top:56.75px;width:1.5px;height:1.5px"></div><div class="ln" style="left:379.25px;top:56.75px;width:1.5px;height:1.5px"></div><div class="ln" style="left:528.75px;top:56.75px;width:1.5px;height:1.5px"></div><div class="ln" style="left:678.25px;top:56.75px;width:1.5px;height:1.5px"></div><div class="ln" style="left:827.75px;top:56.75px;width:1.5px;height:1.5px"></div><div class="ln" style="left:977.25px;top:56.75px;width:1.5px;height:1.5px"></div><div class="ln" style="left:1115.25px;top:56.75px;width:1.5px;height:1.5px"></div></div></div></div><div style="position:absolute;left:243px;top:155px;width:11px;height:712px;border-radius:5.5px;background:#dfe9ef;"></div><div style="position:absolute;left:243.2px;top:356px;width:10.8px;height:386px;border-radius:5.4px;background:#7d7d7d;"></div></div></div><div style="position:absolute;left:8px;top:870.2px;width:1476px;height:1px;background:#cdcdcd;"></div><div style="position:absolute;left:8px;top:871.2px;width:1476px;height:27px;background:#f5f5f5;"></div><div style="position:absolute;top:876px;line-height:16px;font-size:12.5px;color:#555;white-space:nowrap;left:32.5px;">Slide 8 of 11</div><div style="position:absolute;top:876px;line-height:16px;font-size:12.5px;color:#555;white-space:nowrap;letter-spacing:0.05px;left:121.7px;">English (United States)</div><svg style="position:absolute;left:266px;top:872px;" width="30" height="24" viewBox="0 0 30 24" fill="none"><circle cx="14" cy="6.2" r="1.75" stroke="#4a4a4a" stroke-width="1"/><path d="M7.2 7.8 C6.6 6.4 8 5.9 9.3 6.4 C11 7 12.4 7.7 14 7.7 C15.6 7.7 17 7 18.7 6.4 C20 5.9 21.4 6.4 20.8 7.8 C20.3 9 18.4 9.4 16.4 10.5" stroke="#4a4a4a" stroke-width="1" stroke-linecap="round" stroke-linejoin="round"/><path d="M7.2 7.8 C7.6 9 9.6 9.4 11 10 C11.8 10.4 11.8 11.6 11.4 13 L9.4 18 C8.8 19.6 11 20.4 11.8 18.8 L13 15.8" stroke="#4a4a4a" stroke-width="1" stroke-linecap="round" stroke-linejoin="round"/><circle cx="17.56" cy="16.4" r="4.2" fill="#595959"/><path d="M17.56 13.9 V17.1" stroke="#f5f5f5" stroke-width="1.25" stroke-linecap="round"/><circle cx="17.56" cy="18.8" r="0.7" fill="#f5f5f5"/></svg><div style="position:absolute;top:876px;line-height:16px;font-size:12.5px;color:#555;white-space:nowrap;letter-spacing:0.1px;left:295px;">Accessibility: Investigate</div><svg style="position:absolute;left:924.5px;top:876.5px;" width="15" height="15" viewBox="0 0 15 15" fill="none"><path d="M3.2 1 H11.8 a2.2 2.2 0 0 1 2.2 2.2 V8.6 L8.6 14 H3.2 a2.2 2.2 0 0 1 -2.2 -2.2 V3.2 a2.2 2.2 0 0 1 2.2 -2.2 Z" stroke="#555" stroke-width="1.1"/><path d="M14 8.6 H10.6 a2 2 0 0 0 -2 2 V14" stroke="#555" stroke-width="1.1"/></svg><div style="position:absolute;top:876px;line-height:16px;font-size:12.5px;color:#555;white-space:nowrap;left:946.7px;">Notes</div><svg style="position:absolute;left:999.5px;top:876.5px;" width="17" height="16" viewBox="0 0 17 16" fill="none"><path d="M2.6 1 H14.4 a1.6 1.6 0 0 1 1.6 1.6 V9.4 a1.6 1.6 0 0 1 -1.6 1.6 H7.4 L4.4 14.2 V11 H2.6 a1.6 1.6 0 0 1 -1.6 -1.6 V2.6 a1.6 1.6 0 0 1 1.6 -1.6 Z" stroke="#555" stroke-width="1.1" stroke-linejoin="round"/></svg><div style="position:absolute;top:876px;line-height:16px;font-size:12.5px;color:#555;white-space:nowrap;left:1022.7px;">Comments</div><div style="position:absolute;left:1096.2px;top:873.6px;width:30.8px;height:21px;border-radius:4px;background:#b9b9b9;"></div><svg style="position:absolute;left:1102.8px;top:877px;" width="17" height="14" viewBox="0 0 17 14" fill="none"><rect x="0.8" y="0.8" width="15" height="12" rx="2.4" stroke="#333" stroke-width="1.2" fill="none"/><path d="M3.2 0.8 H7 V12.8 H3.2 a2.4 2.4 0 0 1 -2.4 -2.4 V3.2 a2.4 2.4 0 0 1 2.4 -2.4 Z" fill="#333"/></svg><svg style="position:absolute;left:1139.3px;top:875.6px;" width="17" height="17" viewBox="0 0 17 17" fill="none"><rect x="0.8" y="0.8" width="6" height="6" rx="1" stroke="#555" stroke-width="1.1"/><rect x="10" y="0.8" width="6" height="6" rx="1" stroke="#555" stroke-width="1.1"/><rect x="0.8" y="10" width="6" height="6" rx="1" stroke="#555" stroke-width="1.1"/><rect x="10" y="10" width="6" height="6" rx="1" stroke="#555" stroke-width="1.1"/></svg><svg style="position:absolute;left:1175.5px;top:877px;" width="17" height="14" viewBox="0 0 17 14" fill="none"><rect x="0.8" y="0.8" width="15" height="12" rx="1.6" stroke="#555" stroke-width="1.1"/><path d="M8.3 0.8 V12.8" stroke="#555" stroke-width="1.1"/></svg><svg style="position:absolute;left:1211.5px;top:876.4px;" width="17" height="15.5" viewBox="0 0 17 15.5" fill="none"><path d="M0.8 1 H16" stroke="#555" stroke-width="1.3"/><path d="M2 1 V8.4 a1.4 1.4 0 0 0 1.4 1.4 H13.4 a1.4 1.4 0 0 0 1.4 -1.4 V1" stroke="#555" stroke-width="1.1"/><path d="M8.4 9.8 V13.8 M5.4 14 H11.4" stroke="#555" stroke-width="1.1"/></svg><div style="position:absolute;left:1245.4px;top:883.3px;width:7.6px;height:1.2px;background:#777;"></div><div style="position:absolute;left:1260px;top:881.8px;width:100px;height:4.6px;border-radius:2.3px;background:#b9b9b9;"></div><div style="position:absolute;left:1308.8px;top:876.6px;width:18px;height:14.6px;border-radius:7.3px;background:#fff;box-shadow:0 0.5px 2px rgba(0,0,0,.28),0 0 0 0.4px rgba(0,0,0,.08);"></div><div style="position:absolute;left:1366.8px;top:883.3px;width:8px;height:1.2px;background:#777;"></div><div style="position:absolute;left:1370.2px;top:879.9px;width:1.2px;height:8px;background:#777;"></div><div style="position:absolute;top:876px;line-height:16px;font-size:12.5px;color:#555;white-space:nowrap;left:1392.2px;">160%</div><svg style="position:absolute;left:1444px;top:876.5px;" width="16" height="15" viewBox="0 0 16 15" fill="none"><path d="M1 5.4 V1 H5.4 M1 1 L5.8 5.8 M10.6 1 H15 V5.4 M15 1 L10.2 5.8 M1 9.6 V14 H5.4 M1 14 L5.8 9.2 M15 9.6 V14 H10.6 M15 14 L10.2 9.2" stroke="#505050" stroke-width="1" stroke-linejoin="miter"/></svg>
</div></div>
</body></html>
